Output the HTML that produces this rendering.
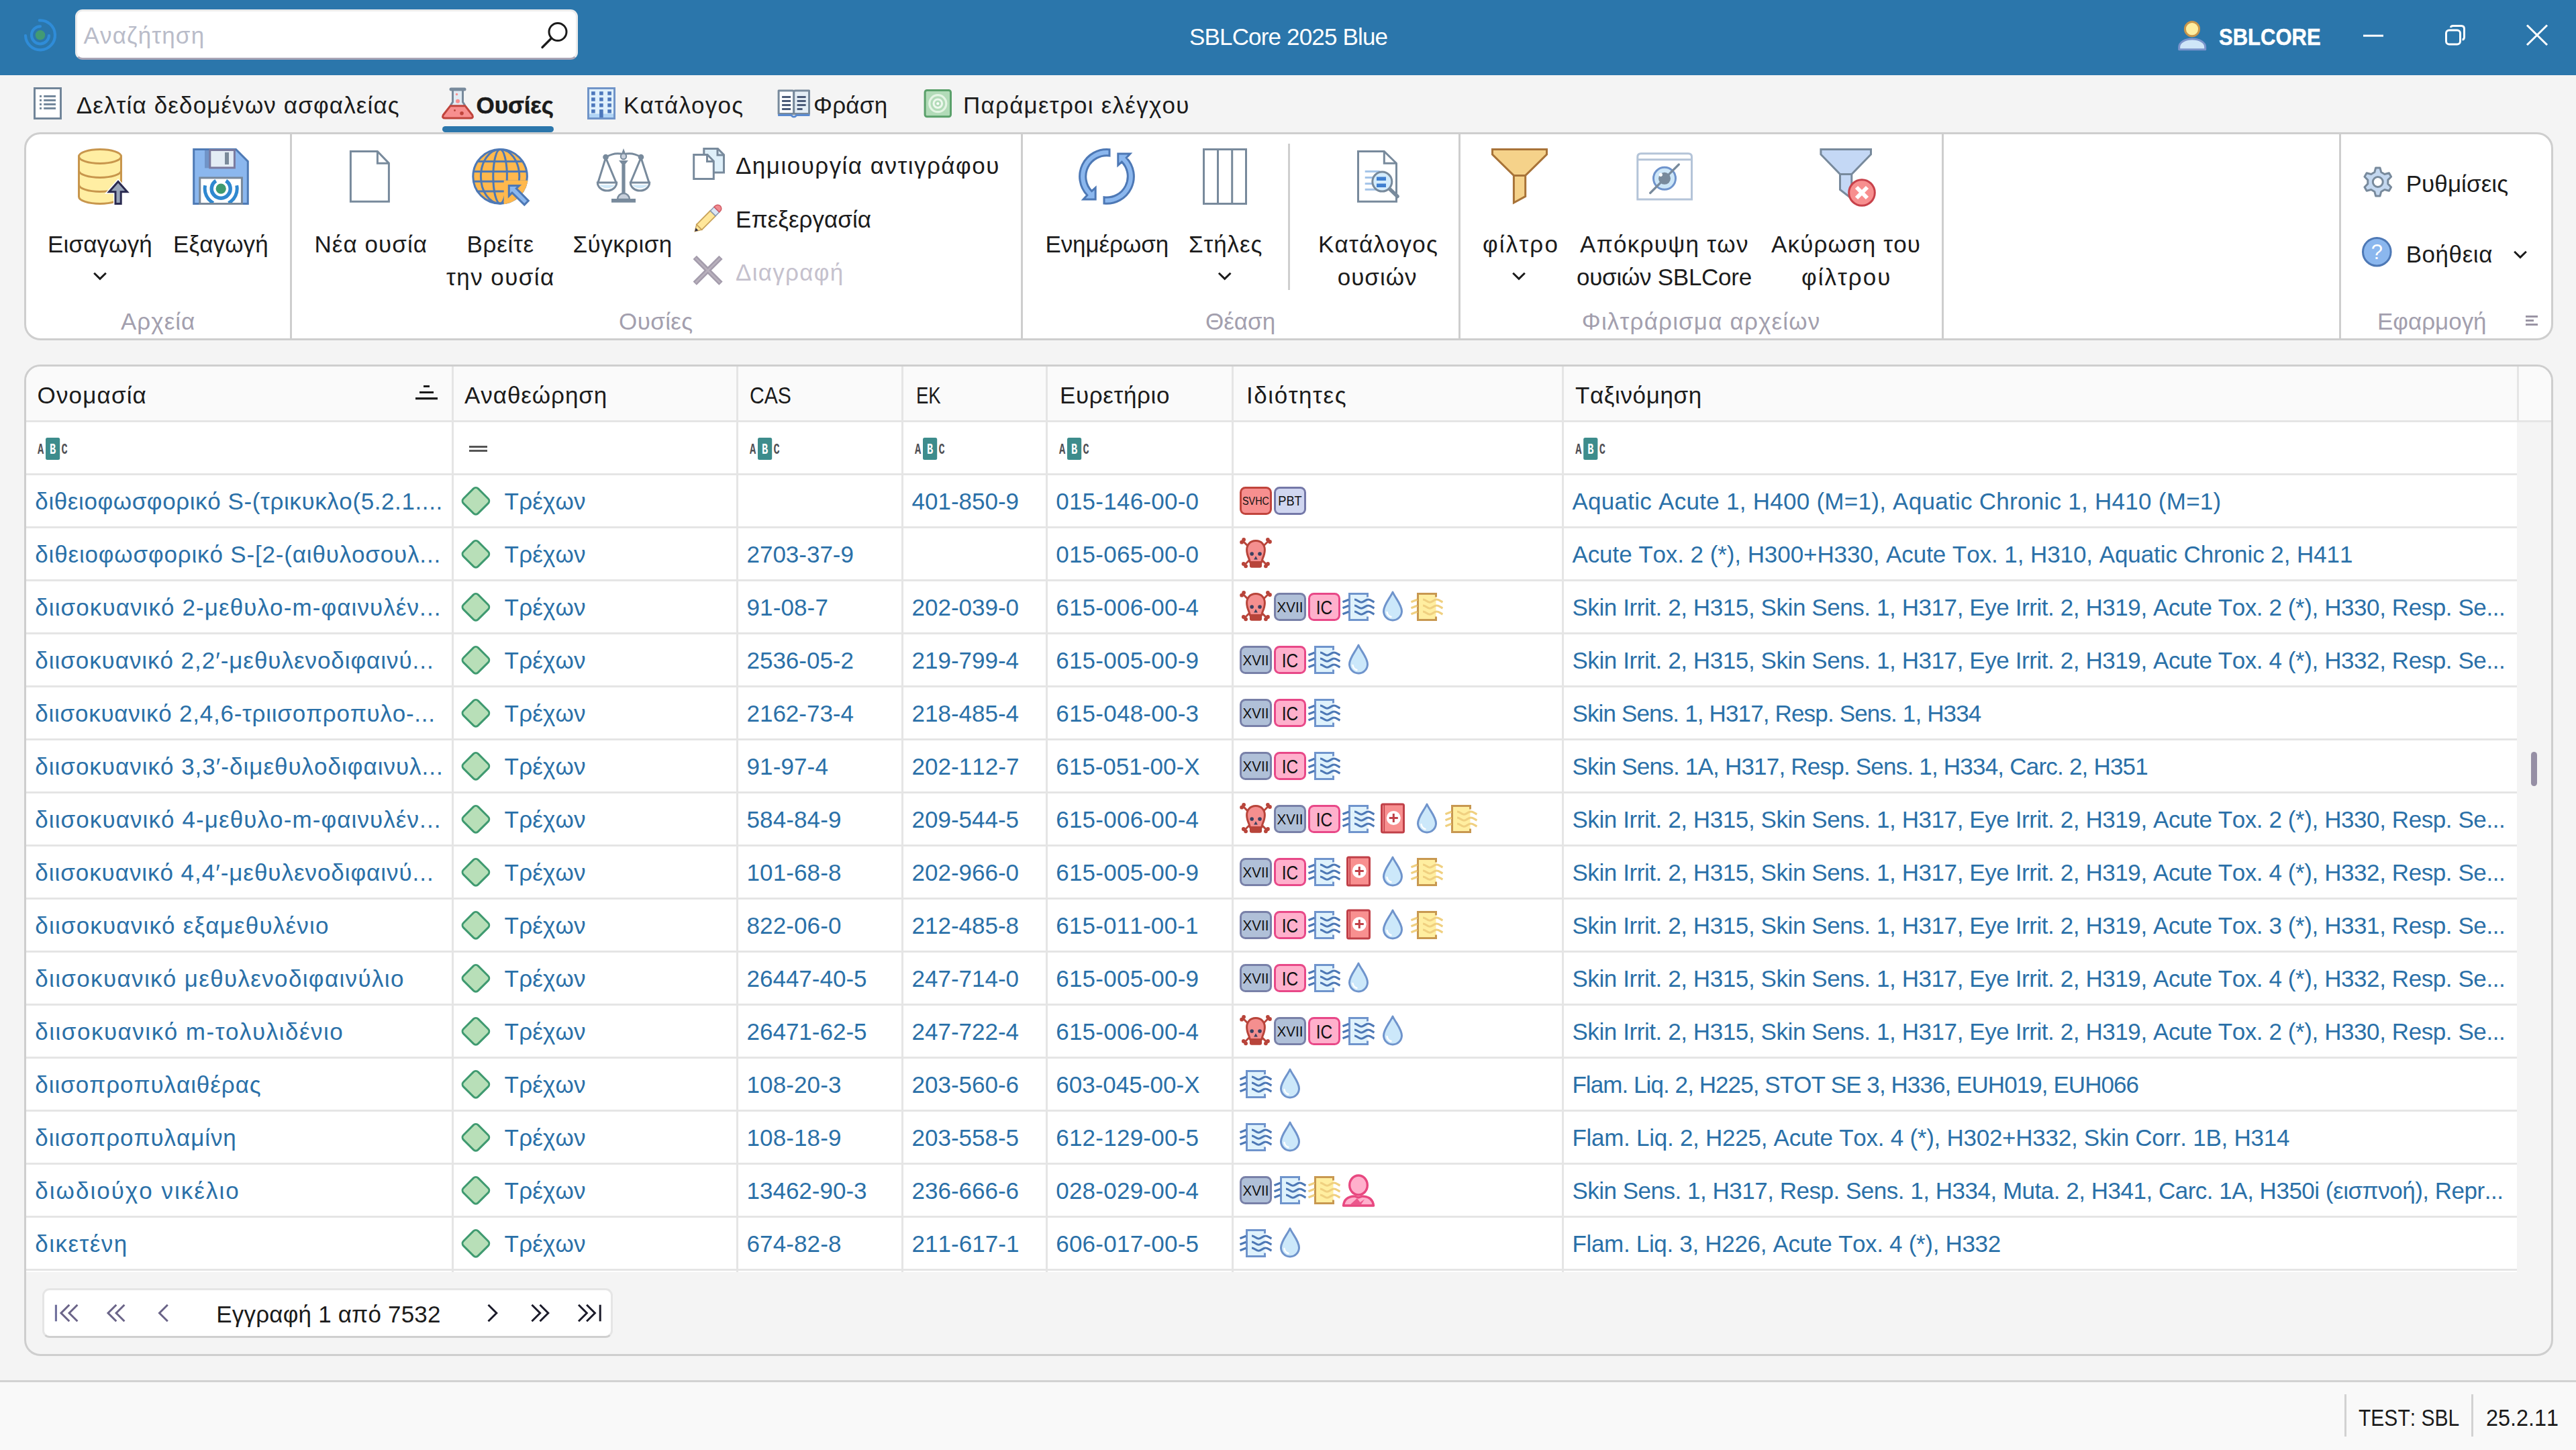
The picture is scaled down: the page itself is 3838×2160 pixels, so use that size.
<!DOCTYPE html>
<html lang="el"><head><meta charset="utf-8"><title>SBLCore 2025 Blue</title>
<style>
html,body{margin:0;padding:0;}
body{width:3838px;height:2160px;overflow:hidden;position:relative;background:#f4f4f4;
font-family:"Liberation Sans",sans-serif;font-kerning:none;}
.t{position:absolute;white-space:pre;line-height:normal;}
svg{overflow:visible;}
</style></head><body>
<div style="position:absolute;left:0px;top:0px;width:3838px;height:112px;background:#2b76ab;"></div>
<div style="position:absolute;left:112px;top:14px;width:749px;height:75px;box-sizing:border-box;background:#fff;border:3px solid #ececec;border-bottom-color:#a9a5b6;border-radius:11px;"></div>
<span class="t " style="left:124.5px;top:33.0px;font-size:35px;letter-spacing:1.158px;color:#b9bcc9;">Αναζήτηση</span>
<span class="t " style="left:1772.0px;top:35.3px;font-size:35px;letter-spacing:-0.837px;color:#fff;">SBLCore 2025 Blue</span>
<span class="t " style="left:3306.0px;top:35.3px;font-size:35px;transform:scaleX(0.8860);transform-origin:0 0;color:#fff;font-weight:bold;-webkit-text-stroke:0.5px #fff;">SBLCORE</span>
<span class="t " style="left:113.7px;top:137.1px;font-size:35px;letter-spacing:1.134px;color:#1b1b1b;">Δελτία δεδομένων ασφαλείας</span>
<span class="t " style="left:709.6px;top:137.1px;font-size:35px;letter-spacing:-0.123px;color:#1b1b1b;font-weight:bold;-webkit-text-stroke:0.5px #1b1b1b;">Ουσίες</span>
<span class="t " style="left:929.0px;top:137.1px;font-size:35px;letter-spacing:1.195px;color:#1b1b1b;">Κατάλογος</span>
<span class="t " style="left:1212.0px;top:137.1px;font-size:35px;letter-spacing:0.250px;color:#1b1b1b;">Φράση</span>
<span class="t " style="left:1435.0px;top:137.1px;font-size:35px;letter-spacing:1.241px;color:#1b1b1b;">Παράμετροι ελέγχου</span>
<div style="position:absolute;left:36px;top:197px;width:3768px;height:310px;box-sizing:border-box;background:#fff;border:3px solid #cecece;border-radius:24px;"></div>
<div style="position:absolute;left:659px;top:188px;width:166px;height:9px;background:#2b76ab;border-radius:4.5px;"></div>
<div style="position:absolute;left:432px;top:200px;width:3px;height:304px;background:#cecece;"></div>
<div style="position:absolute;left:1521px;top:200px;width:3px;height:304px;background:#cecece;"></div>
<div style="position:absolute;left:2173px;top:200px;width:3px;height:304px;background:#cecece;"></div>
<div style="position:absolute;left:2893px;top:200px;width:3px;height:304px;background:#cecece;"></div>
<div style="position:absolute;left:3485px;top:200px;width:3px;height:304px;background:#cecece;"></div>
<div style="position:absolute;left:1919px;top:214px;width:3px;height:218px;background:#cfcfcf;"></div>
<span class="t " style="left:71.0px;top:344.1px;font-size:35px;letter-spacing:0.145px;color:#1b1b1b;">Εισαγωγή</span>
<span class="t " style="left:258.0px;top:344.1px;font-size:35px;letter-spacing:0.094px;color:#1b1b1b;">Εξαγωγή</span>
<span class="t " style="left:468.5px;top:344.1px;font-size:35px;letter-spacing:1.064px;color:#1b1b1b;">Νέα ουσία</span>
<span class="t " style="left:695.5px;top:344.1px;font-size:35px;letter-spacing:0.703px;color:#1b1b1b;">Βρείτε</span>
<span class="t " style="left:665.0px;top:392.8px;font-size:35px;letter-spacing:1.439px;color:#1b1b1b;">την ουσία</span>
<span class="t " style="left:853.5px;top:344.1px;font-size:35px;letter-spacing:0.459px;color:#1b1b1b;">Σύγκριση</span>
<span class="t " style="left:1096.0px;top:227.3px;font-size:35px;letter-spacing:1.476px;color:#1b1b1b;">Δημιουργία αντιγράφου</span>
<span class="t " style="left:1096.0px;top:307.3px;font-size:35px;letter-spacing:0.040px;color:#1b1b1b;">Επεξεργασία</span>
<span class="t " style="left:1096.0px;top:386.3px;font-size:35px;letter-spacing:1.286px;color:#c5c1cd;">Διαγραφή</span>
<span class="t " style="left:1557.4px;top:344.1px;font-size:35px;letter-spacing:-0.073px;color:#1b1b1b;">Ενημέρωση</span>
<span class="t " style="left:1771.0px;top:344.1px;font-size:35px;letter-spacing:0.870px;color:#1b1b1b;">Στήλες</span>
<span class="t " style="left:1964.0px;top:344.1px;font-size:35px;letter-spacing:1.170px;color:#1b1b1b;">Κατάλογος</span>
<span class="t " style="left:1992.7px;top:392.8px;font-size:35px;letter-spacing:1.023px;color:#1b1b1b;">ουσιών</span>
<span class="t " style="left:2209.0px;top:344.1px;font-size:35px;letter-spacing:2.143px;color:#1b1b1b;">φίλτρο</span>
<span class="t " style="left:2354.0px;top:344.1px;font-size:35px;letter-spacing:1.289px;color:#1b1b1b;">Απόκρυψη των</span>
<span class="t " style="left:2349.0px;top:392.8px;font-size:35px;letter-spacing:-0.260px;color:#1b1b1b;">ουσιών SBLCore</span>
<span class="t " style="left:2639.0px;top:344.1px;font-size:35px;letter-spacing:1.150px;color:#1b1b1b;">Ακύρωση του</span>
<span class="t " style="left:2684.0px;top:392.8px;font-size:35px;letter-spacing:2.003px;color:#1b1b1b;">φίλτρου</span>
<span class="t " style="left:3584.7px;top:253.8px;font-size:35px;letter-spacing:0.079px;color:#1b1b1b;">Ρυθμίσεις</span>
<span class="t " style="left:3584.7px;top:359.3px;font-size:35px;letter-spacing:0.553px;color:#1b1b1b;">Βοήθεια</span>
<span class="t " style="left:180.0px;top:459.2px;font-size:35px;letter-spacing:1.000px;color:#a39fae;">Αρχεία</span>
<span class="t " style="left:922.0px;top:459.2px;font-size:35px;letter-spacing:0.403px;color:#a39fae;">Ουσίες</span>
<span class="t " style="left:1796.0px;top:459.2px;font-size:35px;letter-spacing:0.000px;color:#a39fae;">Θέαση</span>
<span class="t " style="left:2356.8px;top:459.2px;font-size:35px;letter-spacing:1.179px;color:#a39fae;">Φιλτράρισμα αρχείων</span>
<span class="t " style="left:3541.9px;top:459.2px;font-size:35px;letter-spacing:-0.012px;color:#a39fae;">Εφαρμογή</span>
<div style="position:absolute;left:36px;top:543px;width:3768px;height:1477px;box-sizing:border-box;background:#f4f4f4;border:3px solid #cecece;border-radius:24px;overflow:hidden;"><div style="position:absolute;left:0;top:0;width:3762px;height:80px;background:#fafafa;"></div><div style="position:absolute;left:0;top:83px;width:3711px;height:1266px;background:#fff;"></div></div>
<div style="position:absolute;left:39px;top:626px;width:3762px;height:3px;background:#e5e5e5;"></div>
<div style="position:absolute;left:39px;top:705px;width:3711px;height:3px;background:#e5e5e5;"></div>
<div style="position:absolute;left:39px;top:784px;width:3711px;height:3px;background:#e5e5e5;"></div>
<div style="position:absolute;left:39px;top:863px;width:3711px;height:3px;background:#e5e5e5;"></div>
<div style="position:absolute;left:39px;top:942px;width:3711px;height:3px;background:#e5e5e5;"></div>
<div style="position:absolute;left:39px;top:1021px;width:3711px;height:3px;background:#e5e5e5;"></div>
<div style="position:absolute;left:39px;top:1100px;width:3711px;height:3px;background:#e5e5e5;"></div>
<div style="position:absolute;left:39px;top:1179px;width:3711px;height:3px;background:#e5e5e5;"></div>
<div style="position:absolute;left:39px;top:1258px;width:3711px;height:3px;background:#e5e5e5;"></div>
<div style="position:absolute;left:39px;top:1337px;width:3711px;height:3px;background:#e5e5e5;"></div>
<div style="position:absolute;left:39px;top:1416px;width:3711px;height:3px;background:#e5e5e5;"></div>
<div style="position:absolute;left:39px;top:1495px;width:3711px;height:3px;background:#e5e5e5;"></div>
<div style="position:absolute;left:39px;top:1574px;width:3711px;height:3px;background:#e5e5e5;"></div>
<div style="position:absolute;left:39px;top:1653px;width:3711px;height:3px;background:#e5e5e5;"></div>
<div style="position:absolute;left:39px;top:1732px;width:3711px;height:3px;background:#e5e5e5;"></div>
<div style="position:absolute;left:39px;top:1811px;width:3711px;height:3px;background:#e5e5e5;"></div>
<div style="position:absolute;left:39px;top:1890px;width:3711px;height:3px;background:#e5e5e5;"></div>
<div style="position:absolute;left:673px;top:546px;width:3px;height:1349px;background:#e5e5e5;"></div>
<div style="position:absolute;left:1097px;top:546px;width:3px;height:1349px;background:#e5e5e5;"></div>
<div style="position:absolute;left:1343px;top:546px;width:3px;height:1349px;background:#e5e5e5;"></div>
<div style="position:absolute;left:1558px;top:546px;width:3px;height:1349px;background:#e5e5e5;"></div>
<div style="position:absolute;left:1835px;top:546px;width:3px;height:1349px;background:#e5e5e5;"></div>
<div style="position:absolute;left:2327px;top:546px;width:3px;height:1349px;background:#e5e5e5;"></div>
<div style="position:absolute;left:3750px;top:546px;width:3px;height:83px;background:#e5e5e5;"></div>
<span class="t " style="left:55.6px;top:569.1px;font-size:35px;letter-spacing:1.145px;color:#1b1b1b;">Ονομασία</span>
<span class="t " style="left:692.0px;top:569.1px;font-size:35px;letter-spacing:0.932px;color:#1b1b1b;">Αναθεώρηση</span>
<span class="t " style="left:1117.0px;top:569.1px;font-size:35px;transform:scaleX(0.8611);transform-origin:0 0;color:#1b1b1b;">CAS</span>
<span class="t " style="left:1364.5px;top:569.1px;font-size:35px;transform:scaleX(0.7870);transform-origin:0 0;color:#1b1b1b;">ΕΚ</span>
<span class="t " style="left:1579.0px;top:569.1px;font-size:35px;letter-spacing:0.625px;color:#1b1b1b;">Ευρετήριο</span>
<span class="t " style="left:1857.0px;top:569.1px;font-size:35px;letter-spacing:1.564px;color:#1b1b1b;">Ιδιότητες</span>
<span class="t " style="left:2347.0px;top:569.1px;font-size:35px;letter-spacing:0.608px;color:#1b1b1b;">Ταξινόμηση</span>
<span class="t " style="left:52.3px;top:727.0px;font-size:35px;letter-spacing:0.597px;color:#2a70a8;">διθειοφωσφορικό S-(τρικυκλο(5.2.1....</span>
<span class="t " style="left:751.6px;top:727.0px;font-size:35px;letter-spacing:0.173px;color:#2a70a8;">Τρέχων</span>
<span class="t " style="left:1358.6px;top:727.0px;font-size:35px;letter-spacing:-0.011px;color:#2a70a8;">401-850-9</span>
<span class="t " style="left:1573.2px;top:727.0px;font-size:35px;letter-spacing:0.248px;color:#2a70a8;">015-146-00-0</span>
<span class="t " style="left:2342.4px;top:727.0px;font-size:35px;letter-spacing:0.273px;color:#2a70a8;">Aquatic Acute 1, H400 (M=1), Aquatic Chronic 1, H410 (M=1)</span>
<span class="t " style="left:52.3px;top:806.0px;font-size:35px;letter-spacing:0.829px;color:#2a70a8;">διθειοφωσφορικό S-[2-(αιθυλοσουλ...</span>
<span class="t " style="left:751.6px;top:806.0px;font-size:35px;letter-spacing:0.173px;color:#2a70a8;">Τρέχων</span>
<span class="t " style="left:1112.5px;top:806.0px;font-size:35px;letter-spacing:-0.011px;color:#2a70a8;">2703-37-9</span>
<span class="t " style="left:1573.2px;top:806.0px;font-size:35px;letter-spacing:0.248px;color:#2a70a8;">015-065-00-0</span>
<span class="t " style="left:2342.4px;top:806.0px;font-size:35px;letter-spacing:-0.074px;color:#2a70a8;">Acute Tox. 2 (*), H300+H330, Acute Tox. 1, H310, Aquatic Chronic 2, H411</span>
<span class="t " style="left:52.3px;top:885.0px;font-size:35px;letter-spacing:1.094px;color:#2a70a8;">διισοκυανικό 2-μεθυλο-m-φαινυλέν...</span>
<span class="t " style="left:751.6px;top:885.0px;font-size:35px;letter-spacing:0.173px;color:#2a70a8;">Τρέχων</span>
<span class="t " style="left:1112.5px;top:885.0px;font-size:35px;letter-spacing:0.119px;color:#2a70a8;">91-08-7</span>
<span class="t " style="left:1358.6px;top:885.0px;font-size:35px;letter-spacing:-0.011px;color:#2a70a8;">202-039-0</span>
<span class="t " style="left:1573.2px;top:885.0px;font-size:35px;letter-spacing:0.248px;color:#2a70a8;">615-006-00-4</span>
<span class="t " style="left:2342.4px;top:885.0px;font-size:35px;letter-spacing:-0.415px;color:#2a70a8;">Skin Irrit. 2, H315, Skin Sens. 1, H317, Eye Irrit. 2, H319, Acute Tox. 2 (*), H330, Resp. Se...</span>
<span class="t " style="left:52.3px;top:964.0px;font-size:35px;letter-spacing:0.952px;color:#2a70a8;">διισοκυανικό 2,2′-μεθυλενοδιφαινύ...</span>
<span class="t " style="left:751.6px;top:964.0px;font-size:35px;letter-spacing:0.173px;color:#2a70a8;">Τρέχων</span>
<span class="t " style="left:1112.5px;top:964.0px;font-size:35px;letter-spacing:-0.011px;color:#2a70a8;">2536-05-2</span>
<span class="t " style="left:1358.6px;top:964.0px;font-size:35px;letter-spacing:-0.011px;color:#2a70a8;">219-799-4</span>
<span class="t " style="left:1573.2px;top:964.0px;font-size:35px;letter-spacing:0.248px;color:#2a70a8;">615-005-00-9</span>
<span class="t " style="left:2342.4px;top:964.0px;font-size:35px;letter-spacing:-0.415px;color:#2a70a8;">Skin Irrit. 2, H315, Skin Sens. 1, H317, Eye Irrit. 2, H319, Acute Tox. 4 (*), H332, Resp. Se...</span>
<span class="t " style="left:52.3px;top:1043.0px;font-size:35px;letter-spacing:0.753px;color:#2a70a8;">διισοκυανικό 2,4,6-τριισοπροπυλο-...</span>
<span class="t " style="left:751.6px;top:1043.0px;font-size:35px;letter-spacing:0.173px;color:#2a70a8;">Τρέχων</span>
<span class="t " style="left:1112.5px;top:1043.0px;font-size:35px;letter-spacing:-0.011px;color:#2a70a8;">2162-73-4</span>
<span class="t " style="left:1358.6px;top:1043.0px;font-size:35px;letter-spacing:-0.011px;color:#2a70a8;">218-485-4</span>
<span class="t " style="left:1573.2px;top:1043.0px;font-size:35px;letter-spacing:0.248px;color:#2a70a8;">615-048-00-3</span>
<span class="t " style="left:2342.4px;top:1043.0px;font-size:35px;letter-spacing:-0.845px;color:#2a70a8;">Skin Sens. 1, H317, Resp. Sens. 1, H334</span>
<span class="t " style="left:52.3px;top:1122.0px;font-size:35px;letter-spacing:0.994px;color:#2a70a8;">διισοκυανικό 3,3′-διμεθυλοδιφαινυλ...</span>
<span class="t " style="left:751.6px;top:1122.0px;font-size:35px;letter-spacing:0.173px;color:#2a70a8;">Τρέχων</span>
<span class="t " style="left:1112.5px;top:1122.0px;font-size:35px;letter-spacing:0.119px;color:#2a70a8;">91-97-4</span>
<span class="t " style="left:1358.6px;top:1122.0px;font-size:35px;letter-spacing:0.040px;color:#2a70a8;">202-112-7</span>
<span class="t " style="left:1573.2px;top:1122.0px;font-size:35px;letter-spacing:0.029px;color:#2a70a8;">615-051-00-X</span>
<span class="t " style="left:2342.4px;top:1122.0px;font-size:35px;letter-spacing:-0.785px;color:#2a70a8;">Skin Sens. 1A, H317, Resp. Sens. 1, H334, Carc. 2, H351</span>
<span class="t " style="left:52.3px;top:1201.0px;font-size:35px;letter-spacing:1.094px;color:#2a70a8;">διισοκυανικό 4-μεθυλο-m-φαινυλέν...</span>
<span class="t " style="left:751.6px;top:1201.0px;font-size:35px;letter-spacing:0.173px;color:#2a70a8;">Τρέχων</span>
<span class="t " style="left:1112.5px;top:1201.0px;font-size:35px;letter-spacing:0.117px;color:#2a70a8;">584-84-9</span>
<span class="t " style="left:1358.6px;top:1201.0px;font-size:35px;letter-spacing:-0.011px;color:#2a70a8;">209-544-5</span>
<span class="t " style="left:1573.2px;top:1201.0px;font-size:35px;letter-spacing:0.248px;color:#2a70a8;">615-006-00-4</span>
<span class="t " style="left:2342.4px;top:1201.0px;font-size:35px;letter-spacing:-0.415px;color:#2a70a8;">Skin Irrit. 2, H315, Skin Sens. 1, H317, Eye Irrit. 2, H319, Acute Tox. 2 (*), H330, Resp. Se...</span>
<span class="t " style="left:52.3px;top:1280.0px;font-size:35px;letter-spacing:0.952px;color:#2a70a8;">διισοκυανικό 4,4′-μεθυλενοδιφαινύ...</span>
<span class="t " style="left:751.6px;top:1280.0px;font-size:35px;letter-spacing:0.173px;color:#2a70a8;">Τρέχων</span>
<span class="t " style="left:1112.5px;top:1280.0px;font-size:35px;letter-spacing:0.117px;color:#2a70a8;">101-68-8</span>
<span class="t " style="left:1358.6px;top:1280.0px;font-size:35px;letter-spacing:-0.011px;color:#2a70a8;">202-966-0</span>
<span class="t " style="left:1573.2px;top:1280.0px;font-size:35px;letter-spacing:0.248px;color:#2a70a8;">615-005-00-9</span>
<span class="t " style="left:2342.4px;top:1280.0px;font-size:35px;letter-spacing:-0.415px;color:#2a70a8;">Skin Irrit. 2, H315, Skin Sens. 1, H317, Eye Irrit. 2, H319, Acute Tox. 4 (*), H332, Resp. Se...</span>
<span class="t " style="left:52.3px;top:1359.0px;font-size:35px;letter-spacing:1.184px;color:#2a70a8;">διισοκυανικό εξαμεθυλένιο</span>
<span class="t " style="left:751.6px;top:1359.0px;font-size:35px;letter-spacing:0.173px;color:#2a70a8;">Τρέχων</span>
<span class="t " style="left:1112.5px;top:1359.0px;font-size:35px;letter-spacing:0.117px;color:#2a70a8;">822-06-0</span>
<span class="t " style="left:1358.6px;top:1359.0px;font-size:35px;letter-spacing:-0.011px;color:#2a70a8;">212-485-8</span>
<span class="t " style="left:1573.2px;top:1359.0px;font-size:35px;letter-spacing:0.194px;color:#2a70a8;">615-011-00-1</span>
<span class="t " style="left:2342.4px;top:1359.0px;font-size:35px;letter-spacing:-0.415px;color:#2a70a8;">Skin Irrit. 2, H315, Skin Sens. 1, H317, Eye Irrit. 2, H319, Acute Tox. 3 (*), H331, Resp. Se...</span>
<span class="t " style="left:52.3px;top:1438.0px;font-size:35px;letter-spacing:1.345px;color:#2a70a8;">διισοκυανικό μεθυλενοδιφαινύλιο</span>
<span class="t " style="left:751.6px;top:1438.0px;font-size:35px;letter-spacing:0.173px;color:#2a70a8;">Τρέχων</span>
<span class="t " style="left:1112.5px;top:1438.0px;font-size:35px;letter-spacing:0.002px;color:#2a70a8;">26447-40-5</span>
<span class="t " style="left:1358.6px;top:1438.0px;font-size:35px;letter-spacing:-0.011px;color:#2a70a8;">247-714-0</span>
<span class="t " style="left:1573.2px;top:1438.0px;font-size:35px;letter-spacing:0.248px;color:#2a70a8;">615-005-00-9</span>
<span class="t " style="left:2342.4px;top:1438.0px;font-size:35px;letter-spacing:-0.415px;color:#2a70a8;">Skin Irrit. 2, H315, Skin Sens. 1, H317, Eye Irrit. 2, H319, Acute Tox. 4 (*), H332, Resp. Se...</span>
<span class="t " style="left:52.3px;top:1517.0px;font-size:35px;letter-spacing:1.508px;color:#2a70a8;">διισοκυανικό m-τολυλιδένιο</span>
<span class="t " style="left:751.6px;top:1517.0px;font-size:35px;letter-spacing:0.173px;color:#2a70a8;">Τρέχων</span>
<span class="t " style="left:1112.5px;top:1517.0px;font-size:35px;letter-spacing:0.002px;color:#2a70a8;">26471-62-5</span>
<span class="t " style="left:1358.6px;top:1517.0px;font-size:35px;letter-spacing:-0.011px;color:#2a70a8;">247-722-4</span>
<span class="t " style="left:1573.2px;top:1517.0px;font-size:35px;letter-spacing:0.248px;color:#2a70a8;">615-006-00-4</span>
<span class="t " style="left:2342.4px;top:1517.0px;font-size:35px;letter-spacing:-0.415px;color:#2a70a8;">Skin Irrit. 2, H315, Skin Sens. 1, H317, Eye Irrit. 2, H319, Acute Tox. 2 (*), H330, Resp. Se...</span>
<span class="t " style="left:52.3px;top:1596.0px;font-size:35px;letter-spacing:0.934px;color:#2a70a8;">διισοπροπυλαιθέρας</span>
<span class="t " style="left:751.6px;top:1596.0px;font-size:35px;letter-spacing:0.173px;color:#2a70a8;">Τρέχων</span>
<span class="t " style="left:1112.5px;top:1596.0px;font-size:35px;letter-spacing:0.117px;color:#2a70a8;">108-20-3</span>
<span class="t " style="left:1358.6px;top:1596.0px;font-size:35px;letter-spacing:-0.011px;color:#2a70a8;">203-560-6</span>
<span class="t " style="left:1573.2px;top:1596.0px;font-size:35px;letter-spacing:0.029px;color:#2a70a8;">603-045-00-X</span>
<span class="t " style="left:2342.4px;top:1596.0px;font-size:35px;letter-spacing:-0.925px;color:#2a70a8;">Flam. Liq. 2, H225, STOT SE 3, H336, EUH019, EUH066</span>
<span class="t " style="left:52.3px;top:1675.0px;font-size:35px;letter-spacing:0.932px;color:#2a70a8;">διισοπροπυλαμίνη</span>
<span class="t " style="left:751.6px;top:1675.0px;font-size:35px;letter-spacing:0.173px;color:#2a70a8;">Τρέχων</span>
<span class="t " style="left:1112.5px;top:1675.0px;font-size:35px;letter-spacing:0.117px;color:#2a70a8;">108-18-9</span>
<span class="t " style="left:1358.6px;top:1675.0px;font-size:35px;letter-spacing:-0.011px;color:#2a70a8;">203-558-5</span>
<span class="t " style="left:1573.2px;top:1675.0px;font-size:35px;letter-spacing:0.248px;color:#2a70a8;">612-129-00-5</span>
<span class="t " style="left:2342.4px;top:1675.0px;font-size:35px;letter-spacing:-0.261px;color:#2a70a8;">Flam. Liq. 2, H225, Acute Tox. 4 (*), H302+H332, Skin Corr. 1B, H314</span>
<span class="t " style="left:52.3px;top:1754.0px;font-size:35px;letter-spacing:2.018px;color:#2a70a8;">διωδιούχο νικέλιο</span>
<span class="t " style="left:751.6px;top:1754.0px;font-size:35px;letter-spacing:0.173px;color:#2a70a8;">Τρέχων</span>
<span class="t " style="left:1112.5px;top:1754.0px;font-size:35px;letter-spacing:0.002px;color:#2a70a8;">13462-90-3</span>
<span class="t " style="left:1358.6px;top:1754.0px;font-size:35px;letter-spacing:-0.011px;color:#2a70a8;">236-666-6</span>
<span class="t " style="left:1573.2px;top:1754.0px;font-size:35px;letter-spacing:0.248px;color:#2a70a8;">028-029-00-4</span>
<span class="t " style="left:2342.4px;top:1754.0px;font-size:35px;letter-spacing:-0.487px;color:#2a70a8;">Skin Sens. 1, H317, Resp. Sens. 1, H334, Muta. 2, H341, Carc. 1A, H350i (εισπνοή), Repr...</span>
<span class="t " style="left:52.3px;top:1833.0px;font-size:35px;letter-spacing:1.459px;color:#2a70a8;">δικετένη</span>
<span class="t " style="left:751.6px;top:1833.0px;font-size:35px;letter-spacing:0.173px;color:#2a70a8;">Τρέχων</span>
<span class="t " style="left:1112.5px;top:1833.0px;font-size:35px;letter-spacing:0.117px;color:#2a70a8;">674-82-8</span>
<span class="t " style="left:1358.6px;top:1833.0px;font-size:35px;letter-spacing:0.040px;color:#2a70a8;">211-617-1</span>
<span class="t " style="left:1573.2px;top:1833.0px;font-size:35px;letter-spacing:0.248px;color:#2a70a8;">606-017-00-5</span>
<span class="t " style="left:2342.4px;top:1833.0px;font-size:35px;letter-spacing:-0.313px;color:#2a70a8;">Flam. Liq. 3, H226, Acute Tox. 4 (*), H332</span>
<div style="position:absolute;left:3771px;top:1120px;width:9px;height:51px;background:#968fa5;border-radius:4.5px;"></div>
<div style="position:absolute;left:63px;top:1919px;width:850px;height:74px;box-sizing:border-box;background:#fff;border:3px solid #e5e5e5;border-bottom:3px solid #cfcfcf;border-radius:11px;"></div>
<span class="t " style="left:322.3px;top:1938.3px;font-size:35px;letter-spacing:0.182px;color:#1b1b1b;">Εγγραφή 1 από 7532</span>
<div style="position:absolute;left:0px;top:2056px;width:3838px;height:3px;background:#d2d2d2;"></div>
<div style="position:absolute;left:0px;top:2059px;width:3838px;height:101px;background:#f9f9f9;"></div>
<div style="position:absolute;left:3492.5px;top:2077px;width:3px;height:63px;background:#d2d2d2;"></div>
<div style="position:absolute;left:3681.5px;top:2077px;width:3px;height:63px;background:#d2d2d2;"></div>
<span class="t " style="left:3514.0px;top:2092.1px;font-size:35px;transform:scaleX(0.8576);transform-origin:0 0;color:#1b1b1b;">TEST: SBL</span>
<span class="t " style="left:3703.7px;top:2092.1px;font-size:35px;transform:scaleX(0.9255);transform-origin:0 0;color:#1b1b1b;">25.2.11</span>
<svg style="position:absolute;left:0;top:0" width="3838" height="2160" viewBox="0 0 3838 2160"><g transform="translate(60.00 52.30) "><circle cx="0" cy="0" r="7.30" fill="#429a74"/><path d="M0.00 -13.00 A13.0 13.0 0 1 0 12.98 0.68" fill="none" stroke="#2f8cd8" stroke-width="4.20" stroke-linecap="round"/><path d="M-21.99 0.77 A22.0 22.0 0 1 0 -1.15 -21.97" fill="none" stroke="#2f8cd8" stroke-width="4.20" stroke-linecap="round"/></g><circle cx="831" cy="47.5" r="13" fill="none" stroke="#1b1b1b" stroke-width="3"/><path d="M821.5 57 L808 70.5" stroke="#1b1b1b" stroke-width="3.4" stroke-linecap="round"/><path d="M3246.7 73.8 V70 A19.5 12 0 0 1 3285.7 70 V73.8 Z" fill="#cfe6f8" stroke="#7a94cc" stroke-width="3" stroke-linejoin="round"/><circle cx="3266" cy="43.2" r="10.6" fill="#ffeea0" stroke="#c8964c" stroke-width="3"/><path d="M3521 53.2 H3551" stroke="#fff" stroke-width="3"/><rect x="3644.5" y="45" width="21" height="21" rx="4.5" fill="none" stroke="#fff" stroke-width="3"/><path d="M3651.5 41 V41 Q3651.5 38.5 3655 38.5 H3667 Q3671.5 38.5 3671.5 43 V55 Q3671.5 59 3668.5 59" fill="none" stroke="#fff" stroke-width="3"/><path d="M3765 37.5 L3795 67 M3795 37.5 L3765 67" stroke="#fff" stroke-width="3"/><g transform="translate(50.00 130.00) "><rect x="1.5" y="1.5" width="39" height="45" fill="#fff" stroke="#718599" stroke-width="3"/><rect x="9" y="11.9" width="3" height="3" fill="#718599"/><rect x="15.2" y="11.9" width="17.8" height="3" fill="#718599"/><rect x="9" y="17.9" width="3" height="3" fill="#718599"/><rect x="15.2" y="17.9" width="17.8" height="3" fill="#718599"/><rect x="9" y="23.9" width="3" height="3" fill="#718599"/><rect x="15.2" y="23.9" width="17.8" height="3" fill="#718599"/><rect x="9" y="29.9" width="3" height="3" fill="#718599"/><rect x="15.2" y="29.9" width="17.8" height="3" fill="#718599"/></g><g transform="translate(658.00 130.00) "><rect x="16.5" y="3" width="15" height="25" fill="#e1ebf3"/><path d="M16.5 4 V22 L13.2 27" fill="none" stroke="#788a9c" stroke-width="3"/><path d="M31.5 4 V22 L34.8 27" fill="none" stroke="#788a9c" stroke-width="3"/><path d="M12.8 27.8 H35.2 L45.8 41.5 Q47.8 46 43 46 H5 Q0.2 46 2.200 41.5 Z" fill="#f78f8f" stroke="#c0443c" stroke-width="3" stroke-linejoin="round"/><path d="M14 2.900 H34" stroke="#788a9c" stroke-width="5" stroke-linecap="round"/><circle cx="22.5" cy="10.5" r="1.7" fill="#f78f8f"/><circle cx="24" cy="20.8" r="3" fill="#f78f8f"/><circle cx="19.500" cy="34.5" r="1.4" fill="#b8443a"/><circle cx="30" cy="38.800" r="2.800" fill="#c0443c"/></g><g transform="translate(875.00 130.00) "><rect x="1.5" y="1.5" width="39" height="45" fill="#dff0fc" stroke="#7094c8" stroke-width="3"/><rect x="3" y="39.5" width="36" height="5.5" fill="#b0d4f5"/><rect x="6.1" y="6.3" width="5.6" height="5.4" fill="#4d78bc"/><rect x="6.1" y="15.3" width="5.6" height="5.4" fill="#4d78bc"/><rect x="6.1" y="24.1" width="5.6" height="5.4" fill="#4d78bc"/><rect x="6.1" y="33.1" width="5.6" height="5.4" fill="#4d78bc"/><rect x="18.1" y="6.3" width="5.6" height="5.4" fill="#4d78bc"/><rect x="18.1" y="15.3" width="5.6" height="5.4" fill="#4d78bc"/><rect x="18.1" y="24.1" width="5.6" height="5.4" fill="#4d78bc"/><rect x="30.3" y="6.3" width="5.6" height="5.4" fill="#4d78bc"/><rect x="30.3" y="15.3" width="5.6" height="5.4" fill="#4d78bc"/><rect x="30.3" y="24.1" width="5.6" height="5.4" fill="#4d78bc"/><rect x="30.3" y="33.1" width="5.6" height="5.4" fill="#4d78bc"/><rect x="18.1" y="33.1" width="5.6" height="11.900" fill="#4d78bc"/></g><g transform="translate(1158.60 133.00) "><path d="M1.5 2 H22 Q24.2 2 24.2 4.5 V36.5 H1.5 Z" fill="#fbfcfe" stroke="#788a9c" stroke-width="3" stroke-linejoin="round"/><path d="M46.9 2 H26.4 Q24.2 2 24.2 4.5 V36.5 H46.9 Z" fill="#e4edf5" stroke="#788a9c" stroke-width="3" stroke-linejoin="round"/><path d="M0.5 38.5 H20 Q24.2 43.5 28.4 38.5 H47.9" fill="none" stroke="#5a8ad0" stroke-width="3"/><rect x="6.5" y="10" width="13" height="3" fill="#4a5a78"/><rect x="29" y="10" width="13" height="3" fill="#4a5a78"/><rect x="6.5" y="16" width="13" height="3" fill="#4a5a78"/><rect x="29" y="16" width="13" height="3" fill="#4a5a78"/><rect x="6.5" y="22" width="13" height="3" fill="#4a5a78"/><rect x="29" y="22" width="13" height="3" fill="#4a5a78"/><rect x="6.5" y="28" width="13" height="3" fill="#4a5a78"/><rect x="29" y="28" width="8" height="3" fill="#4a5a78"/></g><g transform="translate(1376.60 133.00) "><rect x="1.5" y="1.5" width="38.4" height="39.3" rx="3" fill="#b2dbb8" stroke="#5aa06a" stroke-width="3"/><circle cx="20.7" cy="21.2" r="12.5" fill="none" stroke="#e4f4e4" stroke-width="3.2"/><circle cx="20.7" cy="21.2" r="6.3" fill="none" stroke="#eef8ee" stroke-width="3"/><circle cx="20.7" cy="21.2" r="2" fill="#fff"/></g><g transform="translate(116.00 221.00) "><path d="M1.5 12 V72 A31.5 10.5 0 0 0 64.5 72 V12" fill="#ffeea3" stroke="#c8964c" stroke-width="3"/><ellipse cx="33" cy="12" rx="31.5" ry="10.5" fill="#ffeea3" stroke="#c8964c" stroke-width="3"/><path d="M1.5 33 A31.5 10.5 0 0 0 64.5 33 M1.5 54 A31.5 10.5 0 0 0 64.5 54" fill="none" stroke="#c8964c" stroke-width="3"/><path d="M60 49.5 L73.5 64.7 H64.2 V82.5 H56 V64.7 H46.5 Z" fill="#fff" stroke="#fff" stroke-width="6" stroke-linejoin="miter"/><path d="M60 49.5 L73.5 64.7 H64.2 V82.5 H56 V64.7 H46.5 Z" fill="#98a4b8" stroke="#2a2a50" stroke-width="3" stroke-linejoin="miter"/></g><g transform="translate(287.20 221.00) "><path d="M1.5 1.5 H64.3 L82.1 19.4 V82.5 H1.5 Z" fill="#8bb7ee" stroke="#4e7ab5" stroke-width="3"/><rect x="17.8" y="3" width="8" height="26.4" fill="#7094c8"/><rect x="25.6" y="2.5" width="36.6" height="26.4" fill="#e4edf5" stroke="#7a7a9e" stroke-width="3"/><rect x="47.8" y="6" width="6" height="18" fill="#7a8a9a"/><rect x="10.6" y="43.9" width="62.6" height="38.6" fill="#fff" stroke="#78889a" stroke-width="3"/><clipPath id="flc"><rect x="12.1" y="45.4" width="59.6" height="35.6"/></clipPath><g clip-path="url(#flc)"><circle cx="42" cy="60.2" r="7.6" fill="#3f9a70"/><path d="M34.58 48.33 A14 14 0 1 0 49.42 48.33" fill="none" stroke="#2f88d0" stroke-width="5.5"/><path d="M53.27 81.39 A24 24 0 0 0 65.48 55.21" fill="none" stroke="#2f88d0" stroke-width="5"/><path d="M18.52 55.21 A24 24 0 0 0 30.73 81.39" fill="none" stroke="#2f88d0" stroke-width="5"/></g></g><g transform="translate(520.90 224.00) "><path d="M1.5 1.5 H41.5 L58.5 19.2 V76.2 H1.5 Z" fill="#fff" stroke="#788a9c" stroke-width="3"/><path d="M41.5 1.5 V19.2 H58.5" fill="none" stroke="#788a9c" stroke-width="3"/></g><g transform="translate(745.10 262.90) "><clipPath id="glc"><circle cx="0" cy="0" r="41.8"/></clipPath><circle cx="0" cy="0" r="40.3" fill="#ffb84d" stroke="#4d78b5" stroke-width="3"/><g clip-path="url(#glc)"><g fill="none" stroke="#4d78b5" stroke-width="3"><ellipse cx="0" cy="0" rx="10.3" ry="40.3"/><ellipse cx="0" cy="0" rx="28.7" ry="40.3"/><path d="M-40.3 -22.4 H40.3"/><path d="M-40.3 -7.5 H40.3"/><path d="M-40.3 7.4 H40.3"/><path d="M-40.3 22.2 H40.3"/></g><rect x="5.6" y="5.9" width="40" height="40" fill="#ffb84d"/></g><path d="M13.2 13.5 H28.6 L24.2 17.9 L42.2 36.2 L36.2 42.2 L17.9 24.2 L13.2 28.9 Z" fill="#8bb7ee" stroke="#4d78b5" stroke-width="3" stroke-linejoin="miter"/></g><g transform="translate(929.00 221.00) "><g fill="none" stroke="#788a9c" stroke-width="3"><path d="M-26 13 Q-13 5 0 9 Q13 5 26 13"/><path d="M-26.5 14 L-38 51 M-26.5 14 L-11 51"/><path d="M26 14 L10.5 51 M26 14 L38 51"/></g><path d="M-38.7 51 H-10.3 A14.2 12 0 0 1 -38.7 51 Z" fill="#fff" stroke="#788a9c" stroke-width="3"/><path d="M10.3 51 H38.7 A14.2 12 0 0 1 10.3 51 Z" fill="#fff" stroke="#788a9c" stroke-width="3"/><path d="M-36 54.5 H-13 A13 9 0 0 1 -36 54.5 Z" fill="#cfe8f8"/><path d="M13 54.5 H36 A13 9 0 0 1 13 54.5 Z" fill="#cfe8f8"/><rect x="-2.6" y="18" width="5.2" height="58" fill="#788a9c"/><path d="M-7 18 H7 L3 23 H-3 Z" fill="#788a9c"/><path d="M0 0 L3 8 L0 12 L-3 8 Z" fill="#788a9c"/><circle cx="0" cy="12" r="4.2" fill="#c8d0dc" stroke="#788a9c" stroke-width="2"/><circle cx="-26.5" cy="13" r="4.3" fill="#788a9c"/><circle cx="26" cy="13" r="4.3" fill="#788a9c"/><path d="M-9 76 A9 9 0 0 1 9 76 Z" fill="#c8d0dc" stroke="#788a9c" stroke-width="2.5"/><rect x="-18" y="75" width="36" height="5.7" fill="#788a9c"/></g><g transform="translate(1032.00 220.00) "><path d="M16.8 1.5 H37.5 L46.5 10.5 V37 H16.8 Z" fill="#dff0fa" stroke="#788a9c" stroke-width="3"/><path d="M37 1.5 V11 H46.5" fill="none" stroke="#788a9c" stroke-width="3"/><path d="M1.7 10.5 H22 L31.3 20 V46.5 H1.7 Z" fill="#fff" stroke="#788a9c" stroke-width="3"/><path d="M21.5 10.5 V20.5 H31.3" fill="none" stroke="#788a9c" stroke-width="3"/></g><g transform="translate(1035.00 345.00) "><g transform="rotate(-45)"><path d="M0.5 0 L9.500 -5.5 V5.5 Z" fill="#ffe79a" stroke="#c9a35a" stroke-width="1.5"/><path d="M0.5 0 L5 -2.700 V2.700 Z" fill="#2a2a4a"/><rect x="9.500" y="-5.5" width="29" height="11" fill="#ffe79a" stroke="#c9a35a" stroke-width="1.8"/><rect x="38.5" y="-5.5" width="8" height="11" fill="#dbe6f5" stroke="#8a9ab0" stroke-width="1.5"/><path d="M46.5 -5.5 H48.5 A5.5 5.5 0 0 1 48.5 5.5 H46.5 Z" fill="#f08a90" stroke="#d05a64" stroke-width="1.5"/></g></g><g transform="translate(1032.40 380.60) "><path d="M2.800 2.800 L41.600 41.600 M41.600 2.800 L2.800 41.600" stroke="#a49cac" stroke-width="7.5"/><path d="M4 4 L40.400 40.400 M40.400 4 L4 40.400" stroke="#b8b0bc" stroke-width="2.5"/></g><g transform="translate(1649.00 262.90) "><g fill="#8bb7ee" stroke="#4d78b5" stroke-width="3" stroke-linejoin="miter"><path d="M4 -40.2 A40.4 40.4 0 0 0 -29.2 27.9 L-34.9 34 H-16.8 V16.7 L-22.4 21.8 A31.2 31.2 0 0 1 4 -30.9 Z"/><path d="M4 -40.2 A40.4 40.4 0 0 0 -29.2 27.9 L-34.9 34 H-16.8 V16.7 L-22.4 21.8 A31.2 31.2 0 0 1 4 -30.9 Z" transform="rotate(180)"/></g></g><g transform="translate(1792.00 221.00) "><rect x="1.5" y="1.5" width="63" height="81" fill="#fff" stroke="#788a9c" stroke-width="3"/><path d="M22.5 1.5 V82.5 M43.7 1.5 V82.5" stroke="#788a9c" stroke-width="3"/></g><g transform="translate(2022.00 224.00) "><path d="M1.5 1.5 H40.3 L58.5 19.3 V76.3 H1.5 Z" fill="#fff" stroke="#788a9c" stroke-width="3"/><path d="M40.3 1.5 V19.3 H58.5" fill="none" stroke="#788a9c" stroke-width="3"/><rect x="11.7" y="29.9" width="22" height="3" fill="#a4c4e8"/><rect x="11.7" y="39.0" width="22" height="3" fill="#a4c4e8"/><rect x="11.7" y="48.1" width="22" height="3" fill="#a4c4e8"/><rect x="11.7" y="56.8" width="22" height="3" fill="#a4c4e8"/><path d="M49 58 L60 68.5" stroke="#788a9c" stroke-width="5.5" stroke-linecap="round"/><circle cx="37.3" cy="46.6" r="14.5" fill="#d4ecfc" stroke="#788a9c" stroke-width="3"/><rect x="29" y="39.5" width="14" height="5.5" fill="#3f7fd0"/><rect x="29" y="49.5" width="14" height="5.5" fill="#3f7fd0"/></g><g transform="translate(2222.00 221.00) "><path d="M1.5 1.5 H82.5 V9 L50.7 40.5 V71.5 L33.4 81 V40.5 L1.5 9 Z" fill="#f5d28a" stroke="#a87338" stroke-width="3" stroke-linejoin="miter"/><path d="M33.4 40.5 H50.7" stroke="#a87338" stroke-width="3"/></g><g transform="translate(2438.30 227.30) "><path d="M1.5 69.8 V6.5 Q1.5 1.5 6.5 1.5 H77.2 Q82.2 1.5 82.2 6.5 V69.8 Z" fill="#fff" stroke="#b4c4d8" stroke-width="3"/><path d="M1.5 10.5 H82.2" stroke="#b4c4d8" stroke-width="3"/><circle cx="41.7" cy="38.5" r="16.5" fill="#cce6f8" stroke="#6f94cc" stroke-width="3"/><circle cx="41.7" cy="38.5" r="9" fill="#788a9c"/><circle cx="36" cy="33" r="2.6" fill="#fff"/><path d="M20.4 60.2 L63 17.7" stroke="#788a9c" stroke-width="3.2" stroke-linecap="round"/></g><g transform="translate(2711.40 221.00) "><path d="M1.5 1.5 H76.1 V9 L47.4 38.5 V75 L30.1 61.5 V38.5 L1.5 9 Z" fill="#c4d8f5" stroke="#788a9c" stroke-width="3"/><path d="M30.1 38.5 H47.4" stroke="#788a9c" stroke-width="3"/><circle cx="62.6" cy="66" r="19.3" fill="#f78f8f" stroke="#c8414a" stroke-width="3"/><path d="M54.6 58 L70.6 74 M70.6 58 L54.6 74" stroke="#fff" stroke-width="6"/></g><g transform="translate(3542.80 271.00) "><path d="M4.98 -14.47 L3.15 -21.07 L-3.15 -21.07 L-4.98 -14.47 L-10.04 -11.55 L-16.67 -13.26 L-19.82 -7.81 L-15.02 -2.92 L-15.02 2.92 L-19.82 7.81 L-16.67 13.26 L-10.04 11.55 L-4.98 14.47 L-3.15 21.07 L3.15 21.07 L4.98 14.47 L10.04 11.55 L16.67 13.26 L19.82 7.81 L15.02 2.92 L15.02 -2.92 L19.82 -7.81 L16.67 -13.26 L10.04 -11.55 Z" fill="#c4d8f0" stroke="#788a9c" stroke-width="3" stroke-linejoin="round"/><circle cx="0" cy="0" r="7.5" fill="#fff" stroke="#788a9c" stroke-width="3"/></g><g transform="translate(3541.30 375.20) "><circle cx="0" cy="0" r="20.8" fill="#8bb7ee" stroke="#4d78b5" stroke-width="3"/><text x="0" y="11" font-family="Liberation Sans, sans-serif" font-size="31" fill="#fff" text-anchor="middle">?</text></g><path d="M140.2 406.7 L149.0 415.3 L157.8 406.7" fill="none" stroke="#1b1b1b" stroke-width="3"/><path d="M1815.9 406.7 L1824.7 415.3 L1833.5 406.7" fill="none" stroke="#1b1b1b" stroke-width="3"/><path d="M2254.2 406.7 L2263.0 415.3 L2271.8 406.7" fill="none" stroke="#1b1b1b" stroke-width="3"/><path d="M3746.2 374.7 L3755.0 383.3 L3763.8 374.7" fill="none" stroke="#1b1b1b" stroke-width="3"/><path d="M3763 471.5 H3781 M3763 477.5 H3775 M3763 483.500 H3781" stroke="#9a94a4" stroke-width="3"/><path d="M631 575.5 H640 M625 584.5 H646 M619 593.7 H652" stroke="#1b1b1b" stroke-width="3.2"/><g transform="translate(56.00 652.00) "><rect x="12" y="0" width="21.2" height="33" rx="2.5" fill="#3d8c8c"/><text x="0" y="23.9" font-family="Liberation Mono, monospace" font-weight="bold" font-size="21.5" lengthAdjust="spacingAndGlyphs" textLength="9.2" fill="#505055">A</text><text x="18" y="23.9" font-family="Liberation Mono, monospace" font-weight="bold" font-size="21.5" lengthAdjust="spacingAndGlyphs" textLength="9.2" fill="#fff">B</text><text x="35.6" y="23.9" font-family="Liberation Mono, monospace" font-weight="bold" font-size="21.5" lengthAdjust="spacingAndGlyphs" textLength="9.2" fill="#505055">C</text></g><g transform="translate(1117.00 652.00) "><rect x="12" y="0" width="21.2" height="33" rx="2.5" fill="#3d8c8c"/><text x="0" y="23.9" font-family="Liberation Mono, monospace" font-weight="bold" font-size="21.5" lengthAdjust="spacingAndGlyphs" textLength="9.2" fill="#505055">A</text><text x="18" y="23.9" font-family="Liberation Mono, monospace" font-weight="bold" font-size="21.5" lengthAdjust="spacingAndGlyphs" textLength="9.2" fill="#fff">B</text><text x="35.6" y="23.9" font-family="Liberation Mono, monospace" font-weight="bold" font-size="21.5" lengthAdjust="spacingAndGlyphs" textLength="9.2" fill="#505055">C</text></g><g transform="translate(1363.00 652.00) "><rect x="12" y="0" width="21.2" height="33" rx="2.5" fill="#3d8c8c"/><text x="0" y="23.9" font-family="Liberation Mono, monospace" font-weight="bold" font-size="21.5" lengthAdjust="spacingAndGlyphs" textLength="9.2" fill="#505055">A</text><text x="18" y="23.9" font-family="Liberation Mono, monospace" font-weight="bold" font-size="21.5" lengthAdjust="spacingAndGlyphs" textLength="9.2" fill="#fff">B</text><text x="35.6" y="23.9" font-family="Liberation Mono, monospace" font-weight="bold" font-size="21.5" lengthAdjust="spacingAndGlyphs" textLength="9.2" fill="#505055">C</text></g><g transform="translate(1578.00 652.00) "><rect x="12" y="0" width="21.2" height="33" rx="2.5" fill="#3d8c8c"/><text x="0" y="23.9" font-family="Liberation Mono, monospace" font-weight="bold" font-size="21.5" lengthAdjust="spacingAndGlyphs" textLength="9.2" fill="#505055">A</text><text x="18" y="23.9" font-family="Liberation Mono, monospace" font-weight="bold" font-size="21.5" lengthAdjust="spacingAndGlyphs" textLength="9.2" fill="#fff">B</text><text x="35.6" y="23.9" font-family="Liberation Mono, monospace" font-weight="bold" font-size="21.5" lengthAdjust="spacingAndGlyphs" textLength="9.2" fill="#505055">C</text></g><g transform="translate(2347.20 652.00) "><rect x="12" y="0" width="21.2" height="33" rx="2.5" fill="#3d8c8c"/><text x="0" y="23.9" font-family="Liberation Mono, monospace" font-weight="bold" font-size="21.5" lengthAdjust="spacingAndGlyphs" textLength="9.2" fill="#505055">A</text><text x="18" y="23.9" font-family="Liberation Mono, monospace" font-weight="bold" font-size="21.5" lengthAdjust="spacingAndGlyphs" textLength="9.2" fill="#fff">B</text><text x="35.6" y="23.9" font-family="Liberation Mono, monospace" font-weight="bold" font-size="21.5" lengthAdjust="spacingAndGlyphs" textLength="9.2" fill="#505055">C</text></g><path d="M699 665.5 H726 M699 671.5 H726" stroke="#555" stroke-width="3"/><g transform="translate(708.90 746.30) "><rect x="-15.5" y="-15.5" width="31" height="31" rx="5" transform="rotate(45)" fill="#b8dfb8" stroke="#3f9a70" stroke-width="3"/></g><g transform="translate(1847.00 746.00) "><rect x="1.5" y="-19.5" width="45" height="39" rx="7" fill="#f78f8f" stroke="#c0443c" stroke-width="3"/><text x="24" y="5.5" font-family="Liberation Sans, sans-serif" font-size="16.8" fill="#111" text-anchor="middle" textLength="40" lengthAdjust="spacingAndGlyphs">SVHC</text></g><g transform="translate(1898.00 746.00) "><rect x="1.5" y="-19.5" width="45" height="39" rx="7" fill="#d0d6f0" stroke="#7478a8" stroke-width="3"/><text x="24" y="7.0" font-family="Liberation Sans, sans-serif" font-size="19.5" fill="#111" text-anchor="middle" textLength="35.5" lengthAdjust="spacingAndGlyphs">PBT</text></g><g transform="translate(708.90 825.30) "><rect x="-15.5" y="-15.5" width="31" height="31" rx="5" transform="rotate(45)" fill="#b8dfb8" stroke="#3f9a70" stroke-width="3"/></g><g transform="translate(1847.00 824.00) "><g stroke="#b8443a" stroke-width="2.900" stroke-linecap="round"><path d="M4.5 -18.4 L40.5 17.600 M43.5 -18.700 L7.300 17.600"/></g><g fill="#b8443a"><circle cx="3.100" cy="-16.300" r="2.9"/><circle cx="6.100" cy="-20.200" r="2.9"/><circle cx="45" cy="-17" r="2.9"/><circle cx="41.900" cy="-20.200" r="2.9"/><circle cx="5.800" cy="16" r="2.9"/><circle cx="9.100" cy="19.300" r="2.9"/><circle cx="42" cy="16" r="2.9"/><circle cx="38.900" cy="19.300" r="2.9"/></g><path d="M24 -18.400 C33 -18.400 37.400 -12 37.400 -5 C37.400 1 35.600 5 34.100 8.300 L32.600 13.500 H15.400 L13.900 8.300 C12.400 5 10.600 1 10.600 -5 C10.600 -12 15 -18.400 24 -18.400 Z" fill="#f48f8f" stroke="#b8443a" stroke-width="3" stroke-linejoin="round"/><path d="M14.900 12.500 H33.100 V18.800 Q33.100 21.800 30 21.800 H18 Q14.900 21.800 14.900 18.800 Z" fill="#b8443a"/><circle cx="18.150" cy="1.050" r="2.800" fill="#3a4060"/><circle cx="30" cy="1.050" r="2.800" fill="#3a4060"/><path d="M24 4.300 L26.800 9.600 H21.200 Z" fill="#3a4060"/></g><g transform="translate(708.90 904.30) "><rect x="-15.5" y="-15.5" width="31" height="31" rx="5" transform="rotate(45)" fill="#b8dfb8" stroke="#3f9a70" stroke-width="3"/></g><g transform="translate(1847.00 903.00) "><g stroke="#b8443a" stroke-width="2.900" stroke-linecap="round"><path d="M4.5 -18.4 L40.5 17.600 M43.5 -18.700 L7.300 17.600"/></g><g fill="#b8443a"><circle cx="3.100" cy="-16.300" r="2.9"/><circle cx="6.100" cy="-20.200" r="2.9"/><circle cx="45" cy="-17" r="2.9"/><circle cx="41.900" cy="-20.200" r="2.9"/><circle cx="5.800" cy="16" r="2.9"/><circle cx="9.100" cy="19.300" r="2.9"/><circle cx="42" cy="16" r="2.9"/><circle cx="38.900" cy="19.300" r="2.9"/></g><path d="M24 -18.400 C33 -18.400 37.400 -12 37.400 -5 C37.400 1 35.600 5 34.100 8.300 L32.600 13.500 H15.400 L13.900 8.300 C12.400 5 10.600 1 10.600 -5 C10.600 -12 15 -18.400 24 -18.400 Z" fill="#f48f8f" stroke="#b8443a" stroke-width="3" stroke-linejoin="round"/><path d="M14.900 12.500 H33.100 V18.800 Q33.100 21.800 30 21.800 H18 Q14.900 21.800 14.900 18.800 Z" fill="#b8443a"/><circle cx="18.150" cy="1.050" r="2.800" fill="#3a4060"/><circle cx="30" cy="1.050" r="2.800" fill="#3a4060"/><path d="M24 4.300 L26.800 9.600 H21.200 Z" fill="#3a4060"/></g><g transform="translate(1898.00 904.00) "><rect x="1.5" y="-19.5" width="45" height="39" rx="7" fill="#b0c0d8" stroke="#7880a8" stroke-width="3"/><text x="24" y="7.8" font-family="Liberation Sans, sans-serif" font-size="21.8" fill="#111" text-anchor="middle" textLength="39" lengthAdjust="spacingAndGlyphs">XVII</text></g><g transform="translate(1949.00 904.00) "><rect x="1.5" y="-19.5" width="45" height="39" rx="7" fill="#ffb0cc" stroke="#e84888" stroke-width="3"/><text x="24" y="10.6" font-family="Liberation Sans, sans-serif" font-size="29.5" fill="#111" text-anchor="middle" textLength="24.5" lengthAdjust="spacingAndGlyphs">IC</text></g><g transform="translate(2000.00 904.00) "><rect x="10.5" y="-19.5" width="27" height="39" fill="#dff2fc"/><path d="M37.5 -14.5 V-19.5 H10.5 V19.5 H37.5 V14.5" fill="none" stroke="#6f94cc" stroke-width="3"/><path d="M0.5 -7.2 L9.5 -10.8" stroke="#4d78b5" stroke-width="3.1" fill="none"/><path d="M18 -11 C22 -11 24 -6.8 28 -6.8 C32 -6.8 34.5 -11 38.5 -11 C42 -11 44 -8.5 47.5 -7" stroke="#4d78b5" stroke-width="3.1" fill="none"/><path d="M0.5 1.8 L9.5 -1.8" stroke="#4d78b5" stroke-width="3.1" fill="none"/><path d="M18 -2 C22 -2 24 2.2 28 2.2 C32 2.2 34.5 -2 38.5 -2 C42 -2 44 0.5 47.5 2" stroke="#4d78b5" stroke-width="3.1" fill="none"/><path d="M0.5 10.8 L9.5 7.2" stroke="#4d78b5" stroke-width="3.1" fill="none"/><path d="M18 7 C22 7 24 11.2 28 11.2 C32 11.2 34.5 7 38.5 7 C42 7 44 9.5 47.5 11" stroke="#4d78b5" stroke-width="3.1" fill="none"/></g><g transform="translate(2051.00 903.00) "><path d="M24 -21 C28 -12 37.5 -2 37.5 7.5 A13.5 13.5 0 0 1 10.500 7.5 C10.5 -2 20 -12 24 -21 Z" fill="#cce8fa" stroke="#6f94cc" stroke-width="3" stroke-linejoin="round"/><path d="M15.5 9 Q16.5 14.5 21.5 16" fill="none" stroke="#fff" stroke-width="2.4" stroke-linecap="round"/></g><g transform="translate(2102.00 904.00) "><rect x="10.5" y="-19.5" width="27" height="39" fill="#ffeea0"/><path d="M37.5 -14.5 V-19.5 H10.5 V19.5 H37.5 V14.5" fill="none" stroke="#c89850" stroke-width="3"/><path d="M0.5 -7.2 L9.5 -10.8" stroke="#f0d080" stroke-width="3.1" fill="none"/><path d="M18 -11 C22 -11 24 -6.8 28 -6.8 C32 -6.8 34.5 -11 38.5 -11 C42 -11 44 -8.5 47.5 -7" stroke="#f0d080" stroke-width="3.1" fill="none"/><path d="M0.5 1.8 L9.5 -1.8" stroke="#f0d080" stroke-width="3.1" fill="none"/><path d="M18 -2 C22 -2 24 2.2 28 2.2 C32 2.2 34.5 -2 38.5 -2 C42 -2 44 0.5 47.5 2" stroke="#f0d080" stroke-width="3.1" fill="none"/><path d="M0.5 10.8 L9.5 7.2" stroke="#f0d080" stroke-width="3.1" fill="none"/><path d="M18 7 C22 7 24 11.2 28 11.2 C32 11.2 34.5 7 38.5 7 C42 7 44 9.5 47.5 11" stroke="#f0d080" stroke-width="3.1" fill="none"/></g><g transform="translate(708.90 983.30) "><rect x="-15.5" y="-15.5" width="31" height="31" rx="5" transform="rotate(45)" fill="#b8dfb8" stroke="#3f9a70" stroke-width="3"/></g><g transform="translate(1847.00 983.00) "><rect x="1.5" y="-19.5" width="45" height="39" rx="7" fill="#b0c0d8" stroke="#7880a8" stroke-width="3"/><text x="24" y="7.8" font-family="Liberation Sans, sans-serif" font-size="21.8" fill="#111" text-anchor="middle" textLength="39" lengthAdjust="spacingAndGlyphs">XVII</text></g><g transform="translate(1898.00 983.00) "><rect x="1.5" y="-19.5" width="45" height="39" rx="7" fill="#ffb0cc" stroke="#e84888" stroke-width="3"/><text x="24" y="10.6" font-family="Liberation Sans, sans-serif" font-size="29.5" fill="#111" text-anchor="middle" textLength="24.5" lengthAdjust="spacingAndGlyphs">IC</text></g><g transform="translate(1949.00 983.00) "><rect x="10.5" y="-19.5" width="27" height="39" fill="#dff2fc"/><path d="M37.5 -14.5 V-19.5 H10.5 V19.5 H37.5 V14.5" fill="none" stroke="#6f94cc" stroke-width="3"/><path d="M0.5 -7.2 L9.5 -10.8" stroke="#4d78b5" stroke-width="3.1" fill="none"/><path d="M18 -11 C22 -11 24 -6.8 28 -6.8 C32 -6.8 34.5 -11 38.5 -11 C42 -11 44 -8.5 47.5 -7" stroke="#4d78b5" stroke-width="3.1" fill="none"/><path d="M0.5 1.8 L9.5 -1.8" stroke="#4d78b5" stroke-width="3.1" fill="none"/><path d="M18 -2 C22 -2 24 2.2 28 2.2 C32 2.2 34.5 -2 38.5 -2 C42 -2 44 0.5 47.5 2" stroke="#4d78b5" stroke-width="3.1" fill="none"/><path d="M0.5 10.8 L9.5 7.2" stroke="#4d78b5" stroke-width="3.1" fill="none"/><path d="M18 7 C22 7 24 11.2 28 11.2 C32 11.2 34.5 7 38.5 7 C42 7 44 9.5 47.5 11" stroke="#4d78b5" stroke-width="3.1" fill="none"/></g><g transform="translate(2000.00 982.00) "><path d="M24 -21 C28 -12 37.5 -2 37.5 7.5 A13.5 13.5 0 0 1 10.500 7.5 C10.5 -2 20 -12 24 -21 Z" fill="#cce8fa" stroke="#6f94cc" stroke-width="3" stroke-linejoin="round"/><path d="M15.5 9 Q16.5 14.5 21.5 16" fill="none" stroke="#fff" stroke-width="2.4" stroke-linecap="round"/></g><g transform="translate(708.90 1062.30) "><rect x="-15.5" y="-15.5" width="31" height="31" rx="5" transform="rotate(45)" fill="#b8dfb8" stroke="#3f9a70" stroke-width="3"/></g><g transform="translate(1847.00 1062.00) "><rect x="1.5" y="-19.5" width="45" height="39" rx="7" fill="#b0c0d8" stroke="#7880a8" stroke-width="3"/><text x="24" y="7.8" font-family="Liberation Sans, sans-serif" font-size="21.8" fill="#111" text-anchor="middle" textLength="39" lengthAdjust="spacingAndGlyphs">XVII</text></g><g transform="translate(1898.00 1062.00) "><rect x="1.5" y="-19.5" width="45" height="39" rx="7" fill="#ffb0cc" stroke="#e84888" stroke-width="3"/><text x="24" y="10.6" font-family="Liberation Sans, sans-serif" font-size="29.5" fill="#111" text-anchor="middle" textLength="24.5" lengthAdjust="spacingAndGlyphs">IC</text></g><g transform="translate(1949.00 1062.00) "><rect x="10.5" y="-19.5" width="27" height="39" fill="#dff2fc"/><path d="M37.5 -14.5 V-19.5 H10.5 V19.5 H37.5 V14.5" fill="none" stroke="#6f94cc" stroke-width="3"/><path d="M0.5 -7.2 L9.5 -10.8" stroke="#4d78b5" stroke-width="3.1" fill="none"/><path d="M18 -11 C22 -11 24 -6.8 28 -6.8 C32 -6.8 34.5 -11 38.5 -11 C42 -11 44 -8.5 47.5 -7" stroke="#4d78b5" stroke-width="3.1" fill="none"/><path d="M0.5 1.8 L9.5 -1.8" stroke="#4d78b5" stroke-width="3.1" fill="none"/><path d="M18 -2 C22 -2 24 2.2 28 2.2 C32 2.2 34.5 -2 38.5 -2 C42 -2 44 0.5 47.5 2" stroke="#4d78b5" stroke-width="3.1" fill="none"/><path d="M0.5 10.8 L9.5 7.2" stroke="#4d78b5" stroke-width="3.1" fill="none"/><path d="M18 7 C22 7 24 11.2 28 11.2 C32 11.2 34.5 7 38.5 7 C42 7 44 9.5 47.5 11" stroke="#4d78b5" stroke-width="3.1" fill="none"/></g><g transform="translate(708.90 1141.30) "><rect x="-15.5" y="-15.5" width="31" height="31" rx="5" transform="rotate(45)" fill="#b8dfb8" stroke="#3f9a70" stroke-width="3"/></g><g transform="translate(1847.00 1141.00) "><rect x="1.5" y="-19.5" width="45" height="39" rx="7" fill="#b0c0d8" stroke="#7880a8" stroke-width="3"/><text x="24" y="7.8" font-family="Liberation Sans, sans-serif" font-size="21.8" fill="#111" text-anchor="middle" textLength="39" lengthAdjust="spacingAndGlyphs">XVII</text></g><g transform="translate(1898.00 1141.00) "><rect x="1.5" y="-19.5" width="45" height="39" rx="7" fill="#ffb0cc" stroke="#e84888" stroke-width="3"/><text x="24" y="10.6" font-family="Liberation Sans, sans-serif" font-size="29.5" fill="#111" text-anchor="middle" textLength="24.5" lengthAdjust="spacingAndGlyphs">IC</text></g><g transform="translate(1949.00 1141.00) "><rect x="10.5" y="-19.5" width="27" height="39" fill="#dff2fc"/><path d="M37.5 -14.5 V-19.5 H10.5 V19.5 H37.5 V14.5" fill="none" stroke="#6f94cc" stroke-width="3"/><path d="M0.5 -7.2 L9.5 -10.8" stroke="#4d78b5" stroke-width="3.1" fill="none"/><path d="M18 -11 C22 -11 24 -6.8 28 -6.8 C32 -6.8 34.5 -11 38.5 -11 C42 -11 44 -8.5 47.5 -7" stroke="#4d78b5" stroke-width="3.1" fill="none"/><path d="M0.5 1.8 L9.5 -1.8" stroke="#4d78b5" stroke-width="3.1" fill="none"/><path d="M18 -2 C22 -2 24 2.2 28 2.2 C32 2.2 34.5 -2 38.5 -2 C42 -2 44 0.5 47.5 2" stroke="#4d78b5" stroke-width="3.1" fill="none"/><path d="M0.5 10.8 L9.5 7.2" stroke="#4d78b5" stroke-width="3.1" fill="none"/><path d="M18 7 C22 7 24 11.2 28 11.2 C32 11.2 34.5 7 38.5 7 C42 7 44 9.5 47.5 11" stroke="#4d78b5" stroke-width="3.1" fill="none"/></g><g transform="translate(708.90 1220.30) "><rect x="-15.5" y="-15.5" width="31" height="31" rx="5" transform="rotate(45)" fill="#b8dfb8" stroke="#3f9a70" stroke-width="3"/></g><g transform="translate(1847.00 1219.00) "><g stroke="#b8443a" stroke-width="2.900" stroke-linecap="round"><path d="M4.5 -18.4 L40.5 17.600 M43.5 -18.700 L7.300 17.600"/></g><g fill="#b8443a"><circle cx="3.100" cy="-16.300" r="2.9"/><circle cx="6.100" cy="-20.200" r="2.9"/><circle cx="45" cy="-17" r="2.9"/><circle cx="41.900" cy="-20.200" r="2.9"/><circle cx="5.800" cy="16" r="2.9"/><circle cx="9.100" cy="19.300" r="2.9"/><circle cx="42" cy="16" r="2.9"/><circle cx="38.900" cy="19.300" r="2.9"/></g><path d="M24 -18.400 C33 -18.400 37.400 -12 37.400 -5 C37.400 1 35.600 5 34.100 8.300 L32.600 13.500 H15.400 L13.900 8.300 C12.400 5 10.600 1 10.600 -5 C10.600 -12 15 -18.400 24 -18.400 Z" fill="#f48f8f" stroke="#b8443a" stroke-width="3" stroke-linejoin="round"/><path d="M14.900 12.500 H33.100 V18.800 Q33.100 21.800 30 21.800 H18 Q14.900 21.800 14.900 18.800 Z" fill="#b8443a"/><circle cx="18.150" cy="1.050" r="2.800" fill="#3a4060"/><circle cx="30" cy="1.050" r="2.800" fill="#3a4060"/><path d="M24 4.300 L26.800 9.600 H21.200 Z" fill="#3a4060"/></g><g transform="translate(1898.00 1220.00) "><rect x="1.5" y="-19.5" width="45" height="39" rx="7" fill="#b0c0d8" stroke="#7880a8" stroke-width="3"/><text x="24" y="7.8" font-family="Liberation Sans, sans-serif" font-size="21.8" fill="#111" text-anchor="middle" textLength="39" lengthAdjust="spacingAndGlyphs">XVII</text></g><g transform="translate(1949.00 1220.00) "><rect x="1.5" y="-19.5" width="45" height="39" rx="7" fill="#ffb0cc" stroke="#e84888" stroke-width="3"/><text x="24" y="10.6" font-family="Liberation Sans, sans-serif" font-size="29.5" fill="#111" text-anchor="middle" textLength="24.5" lengthAdjust="spacingAndGlyphs">IC</text></g><g transform="translate(2000.00 1220.00) "><rect x="10.5" y="-19.5" width="27" height="39" fill="#dff2fc"/><path d="M37.5 -14.5 V-19.5 H10.5 V19.5 H37.5 V14.5" fill="none" stroke="#6f94cc" stroke-width="3"/><path d="M0.5 -7.2 L9.5 -10.8" stroke="#4d78b5" stroke-width="3.1" fill="none"/><path d="M18 -11 C22 -11 24 -6.8 28 -6.8 C32 -6.8 34.5 -11 38.5 -11 C42 -11 44 -8.5 47.5 -7" stroke="#4d78b5" stroke-width="3.1" fill="none"/><path d="M0.5 1.8 L9.5 -1.8" stroke="#4d78b5" stroke-width="3.1" fill="none"/><path d="M18 -2 C22 -2 24 2.2 28 2.2 C32 2.2 34.5 -2 38.5 -2 C42 -2 44 0.5 47.5 2" stroke="#4d78b5" stroke-width="3.1" fill="none"/><path d="M0.5 10.8 L9.5 7.2" stroke="#4d78b5" stroke-width="3.1" fill="none"/><path d="M18 7 C22 7 24 11.2 28 11.2 C32 11.2 34.5 7 38.5 7 C42 7 44 9.5 47.5 11" stroke="#4d78b5" stroke-width="3.1" fill="none"/></g><g transform="translate(2051.00 1219.00) "><rect x="7.5" y="-21" width="33" height="42" rx="2" fill="#f89090" stroke="#c04048" stroke-width="3"/><path d="M11.3 -21 V21" stroke="#c04048" stroke-width="1.6"/><circle cx="25.3" cy="-0.5" r="10.5" fill="#fff"/><path d="M25.3 -7 V6 M18.8 -0.5 H31.8" stroke="#c04048" stroke-width="3"/></g><g transform="translate(2102.00 1219.00) "><path d="M24 -21 C28 -12 37.5 -2 37.5 7.5 A13.5 13.5 0 0 1 10.500 7.5 C10.5 -2 20 -12 24 -21 Z" fill="#cce8fa" stroke="#6f94cc" stroke-width="3" stroke-linejoin="round"/><path d="M15.5 9 Q16.5 14.5 21.5 16" fill="none" stroke="#fff" stroke-width="2.4" stroke-linecap="round"/></g><g transform="translate(2153.00 1220.00) "><rect x="10.5" y="-19.5" width="27" height="39" fill="#ffeea0"/><path d="M37.5 -14.5 V-19.5 H10.5 V19.5 H37.5 V14.5" fill="none" stroke="#c89850" stroke-width="3"/><path d="M0.5 -7.2 L9.5 -10.8" stroke="#f0d080" stroke-width="3.1" fill="none"/><path d="M18 -11 C22 -11 24 -6.8 28 -6.8 C32 -6.8 34.5 -11 38.5 -11 C42 -11 44 -8.5 47.5 -7" stroke="#f0d080" stroke-width="3.1" fill="none"/><path d="M0.5 1.8 L9.5 -1.8" stroke="#f0d080" stroke-width="3.1" fill="none"/><path d="M18 -2 C22 -2 24 2.2 28 2.2 C32 2.2 34.5 -2 38.5 -2 C42 -2 44 0.5 47.5 2" stroke="#f0d080" stroke-width="3.1" fill="none"/><path d="M0.5 10.8 L9.5 7.2" stroke="#f0d080" stroke-width="3.1" fill="none"/><path d="M18 7 C22 7 24 11.2 28 11.2 C32 11.2 34.5 7 38.5 7 C42 7 44 9.5 47.5 11" stroke="#f0d080" stroke-width="3.1" fill="none"/></g><g transform="translate(708.90 1299.30) "><rect x="-15.5" y="-15.5" width="31" height="31" rx="5" transform="rotate(45)" fill="#b8dfb8" stroke="#3f9a70" stroke-width="3"/></g><g transform="translate(1847.00 1299.00) "><rect x="1.5" y="-19.5" width="45" height="39" rx="7" fill="#b0c0d8" stroke="#7880a8" stroke-width="3"/><text x="24" y="7.8" font-family="Liberation Sans, sans-serif" font-size="21.8" fill="#111" text-anchor="middle" textLength="39" lengthAdjust="spacingAndGlyphs">XVII</text></g><g transform="translate(1898.00 1299.00) "><rect x="1.5" y="-19.5" width="45" height="39" rx="7" fill="#ffb0cc" stroke="#e84888" stroke-width="3"/><text x="24" y="10.6" font-family="Liberation Sans, sans-serif" font-size="29.5" fill="#111" text-anchor="middle" textLength="24.5" lengthAdjust="spacingAndGlyphs">IC</text></g><g transform="translate(1949.00 1299.00) "><rect x="10.5" y="-19.5" width="27" height="39" fill="#dff2fc"/><path d="M37.5 -14.5 V-19.5 H10.5 V19.5 H37.5 V14.5" fill="none" stroke="#6f94cc" stroke-width="3"/><path d="M0.5 -7.2 L9.5 -10.8" stroke="#4d78b5" stroke-width="3.1" fill="none"/><path d="M18 -11 C22 -11 24 -6.8 28 -6.8 C32 -6.8 34.5 -11 38.5 -11 C42 -11 44 -8.5 47.5 -7" stroke="#4d78b5" stroke-width="3.1" fill="none"/><path d="M0.5 1.8 L9.5 -1.8" stroke="#4d78b5" stroke-width="3.1" fill="none"/><path d="M18 -2 C22 -2 24 2.2 28 2.2 C32 2.2 34.5 -2 38.5 -2 C42 -2 44 0.5 47.5 2" stroke="#4d78b5" stroke-width="3.1" fill="none"/><path d="M0.5 10.8 L9.5 7.2" stroke="#4d78b5" stroke-width="3.1" fill="none"/><path d="M18 7 C22 7 24 11.2 28 11.2 C32 11.2 34.5 7 38.5 7 C42 7 44 9.5 47.5 11" stroke="#4d78b5" stroke-width="3.1" fill="none"/></g><g transform="translate(2000.00 1298.00) "><rect x="7.5" y="-21" width="33" height="42" rx="2" fill="#f89090" stroke="#c04048" stroke-width="3"/><path d="M11.3 -21 V21" stroke="#c04048" stroke-width="1.6"/><circle cx="25.3" cy="-0.5" r="10.5" fill="#fff"/><path d="M25.3 -7 V6 M18.8 -0.5 H31.8" stroke="#c04048" stroke-width="3"/></g><g transform="translate(2051.00 1298.00) "><path d="M24 -21 C28 -12 37.5 -2 37.5 7.5 A13.5 13.5 0 0 1 10.500 7.5 C10.5 -2 20 -12 24 -21 Z" fill="#cce8fa" stroke="#6f94cc" stroke-width="3" stroke-linejoin="round"/><path d="M15.5 9 Q16.5 14.5 21.5 16" fill="none" stroke="#fff" stroke-width="2.4" stroke-linecap="round"/></g><g transform="translate(2102.00 1299.00) "><rect x="10.5" y="-19.5" width="27" height="39" fill="#ffeea0"/><path d="M37.5 -14.5 V-19.5 H10.5 V19.5 H37.5 V14.5" fill="none" stroke="#c89850" stroke-width="3"/><path d="M0.5 -7.2 L9.5 -10.8" stroke="#f0d080" stroke-width="3.1" fill="none"/><path d="M18 -11 C22 -11 24 -6.8 28 -6.8 C32 -6.8 34.5 -11 38.5 -11 C42 -11 44 -8.5 47.5 -7" stroke="#f0d080" stroke-width="3.1" fill="none"/><path d="M0.5 1.8 L9.5 -1.8" stroke="#f0d080" stroke-width="3.1" fill="none"/><path d="M18 -2 C22 -2 24 2.2 28 2.2 C32 2.2 34.5 -2 38.5 -2 C42 -2 44 0.5 47.5 2" stroke="#f0d080" stroke-width="3.1" fill="none"/><path d="M0.5 10.8 L9.5 7.2" stroke="#f0d080" stroke-width="3.1" fill="none"/><path d="M18 7 C22 7 24 11.2 28 11.2 C32 11.2 34.5 7 38.5 7 C42 7 44 9.5 47.5 11" stroke="#f0d080" stroke-width="3.1" fill="none"/></g><g transform="translate(708.90 1378.30) "><rect x="-15.5" y="-15.5" width="31" height="31" rx="5" transform="rotate(45)" fill="#b8dfb8" stroke="#3f9a70" stroke-width="3"/></g><g transform="translate(1847.00 1378.00) "><rect x="1.5" y="-19.5" width="45" height="39" rx="7" fill="#b0c0d8" stroke="#7880a8" stroke-width="3"/><text x="24" y="7.8" font-family="Liberation Sans, sans-serif" font-size="21.8" fill="#111" text-anchor="middle" textLength="39" lengthAdjust="spacingAndGlyphs">XVII</text></g><g transform="translate(1898.00 1378.00) "><rect x="1.5" y="-19.5" width="45" height="39" rx="7" fill="#ffb0cc" stroke="#e84888" stroke-width="3"/><text x="24" y="10.6" font-family="Liberation Sans, sans-serif" font-size="29.5" fill="#111" text-anchor="middle" textLength="24.5" lengthAdjust="spacingAndGlyphs">IC</text></g><g transform="translate(1949.00 1378.00) "><rect x="10.5" y="-19.5" width="27" height="39" fill="#dff2fc"/><path d="M37.5 -14.5 V-19.5 H10.5 V19.5 H37.5 V14.5" fill="none" stroke="#6f94cc" stroke-width="3"/><path d="M0.5 -7.2 L9.5 -10.8" stroke="#4d78b5" stroke-width="3.1" fill="none"/><path d="M18 -11 C22 -11 24 -6.8 28 -6.8 C32 -6.8 34.5 -11 38.5 -11 C42 -11 44 -8.5 47.5 -7" stroke="#4d78b5" stroke-width="3.1" fill="none"/><path d="M0.5 1.8 L9.5 -1.8" stroke="#4d78b5" stroke-width="3.1" fill="none"/><path d="M18 -2 C22 -2 24 2.2 28 2.2 C32 2.2 34.5 -2 38.5 -2 C42 -2 44 0.5 47.5 2" stroke="#4d78b5" stroke-width="3.1" fill="none"/><path d="M0.5 10.8 L9.5 7.2" stroke="#4d78b5" stroke-width="3.1" fill="none"/><path d="M18 7 C22 7 24 11.2 28 11.2 C32 11.2 34.5 7 38.5 7 C42 7 44 9.5 47.5 11" stroke="#4d78b5" stroke-width="3.1" fill="none"/></g><g transform="translate(2000.00 1377.00) "><rect x="7.5" y="-21" width="33" height="42" rx="2" fill="#f89090" stroke="#c04048" stroke-width="3"/><path d="M11.3 -21 V21" stroke="#c04048" stroke-width="1.6"/><circle cx="25.3" cy="-0.5" r="10.5" fill="#fff"/><path d="M25.3 -7 V6 M18.8 -0.5 H31.8" stroke="#c04048" stroke-width="3"/></g><g transform="translate(2051.00 1377.00) "><path d="M24 -21 C28 -12 37.5 -2 37.5 7.5 A13.5 13.5 0 0 1 10.500 7.5 C10.5 -2 20 -12 24 -21 Z" fill="#cce8fa" stroke="#6f94cc" stroke-width="3" stroke-linejoin="round"/><path d="M15.5 9 Q16.5 14.5 21.5 16" fill="none" stroke="#fff" stroke-width="2.4" stroke-linecap="round"/></g><g transform="translate(2102.00 1378.00) "><rect x="10.5" y="-19.5" width="27" height="39" fill="#ffeea0"/><path d="M37.5 -14.5 V-19.5 H10.5 V19.5 H37.5 V14.5" fill="none" stroke="#c89850" stroke-width="3"/><path d="M0.5 -7.2 L9.5 -10.8" stroke="#f0d080" stroke-width="3.1" fill="none"/><path d="M18 -11 C22 -11 24 -6.8 28 -6.8 C32 -6.8 34.5 -11 38.5 -11 C42 -11 44 -8.5 47.5 -7" stroke="#f0d080" stroke-width="3.1" fill="none"/><path d="M0.5 1.8 L9.5 -1.8" stroke="#f0d080" stroke-width="3.1" fill="none"/><path d="M18 -2 C22 -2 24 2.2 28 2.2 C32 2.2 34.5 -2 38.5 -2 C42 -2 44 0.5 47.5 2" stroke="#f0d080" stroke-width="3.1" fill="none"/><path d="M0.5 10.8 L9.5 7.2" stroke="#f0d080" stroke-width="3.1" fill="none"/><path d="M18 7 C22 7 24 11.2 28 11.2 C32 11.2 34.5 7 38.5 7 C42 7 44 9.5 47.5 11" stroke="#f0d080" stroke-width="3.1" fill="none"/></g><g transform="translate(708.90 1457.30) "><rect x="-15.5" y="-15.5" width="31" height="31" rx="5" transform="rotate(45)" fill="#b8dfb8" stroke="#3f9a70" stroke-width="3"/></g><g transform="translate(1847.00 1457.00) "><rect x="1.5" y="-19.5" width="45" height="39" rx="7" fill="#b0c0d8" stroke="#7880a8" stroke-width="3"/><text x="24" y="7.8" font-family="Liberation Sans, sans-serif" font-size="21.8" fill="#111" text-anchor="middle" textLength="39" lengthAdjust="spacingAndGlyphs">XVII</text></g><g transform="translate(1898.00 1457.00) "><rect x="1.5" y="-19.5" width="45" height="39" rx="7" fill="#ffb0cc" stroke="#e84888" stroke-width="3"/><text x="24" y="10.6" font-family="Liberation Sans, sans-serif" font-size="29.5" fill="#111" text-anchor="middle" textLength="24.5" lengthAdjust="spacingAndGlyphs">IC</text></g><g transform="translate(1949.00 1457.00) "><rect x="10.5" y="-19.5" width="27" height="39" fill="#dff2fc"/><path d="M37.5 -14.5 V-19.5 H10.5 V19.5 H37.5 V14.5" fill="none" stroke="#6f94cc" stroke-width="3"/><path d="M0.5 -7.2 L9.5 -10.8" stroke="#4d78b5" stroke-width="3.1" fill="none"/><path d="M18 -11 C22 -11 24 -6.8 28 -6.8 C32 -6.8 34.5 -11 38.5 -11 C42 -11 44 -8.5 47.5 -7" stroke="#4d78b5" stroke-width="3.1" fill="none"/><path d="M0.5 1.8 L9.5 -1.8" stroke="#4d78b5" stroke-width="3.1" fill="none"/><path d="M18 -2 C22 -2 24 2.2 28 2.2 C32 2.2 34.5 -2 38.5 -2 C42 -2 44 0.5 47.5 2" stroke="#4d78b5" stroke-width="3.1" fill="none"/><path d="M0.5 10.8 L9.5 7.2" stroke="#4d78b5" stroke-width="3.1" fill="none"/><path d="M18 7 C22 7 24 11.2 28 11.2 C32 11.2 34.5 7 38.5 7 C42 7 44 9.5 47.5 11" stroke="#4d78b5" stroke-width="3.1" fill="none"/></g><g transform="translate(2000.00 1456.00) "><path d="M24 -21 C28 -12 37.5 -2 37.5 7.5 A13.5 13.5 0 0 1 10.500 7.5 C10.5 -2 20 -12 24 -21 Z" fill="#cce8fa" stroke="#6f94cc" stroke-width="3" stroke-linejoin="round"/><path d="M15.5 9 Q16.5 14.5 21.5 16" fill="none" stroke="#fff" stroke-width="2.4" stroke-linecap="round"/></g><g transform="translate(708.90 1536.30) "><rect x="-15.5" y="-15.5" width="31" height="31" rx="5" transform="rotate(45)" fill="#b8dfb8" stroke="#3f9a70" stroke-width="3"/></g><g transform="translate(1847.00 1535.00) "><g stroke="#b8443a" stroke-width="2.900" stroke-linecap="round"><path d="M4.5 -18.4 L40.5 17.600 M43.5 -18.700 L7.300 17.600"/></g><g fill="#b8443a"><circle cx="3.100" cy="-16.300" r="2.9"/><circle cx="6.100" cy="-20.200" r="2.9"/><circle cx="45" cy="-17" r="2.9"/><circle cx="41.900" cy="-20.200" r="2.9"/><circle cx="5.800" cy="16" r="2.9"/><circle cx="9.100" cy="19.300" r="2.9"/><circle cx="42" cy="16" r="2.9"/><circle cx="38.900" cy="19.300" r="2.9"/></g><path d="M24 -18.400 C33 -18.400 37.400 -12 37.400 -5 C37.400 1 35.600 5 34.100 8.300 L32.600 13.500 H15.400 L13.900 8.300 C12.400 5 10.600 1 10.600 -5 C10.600 -12 15 -18.400 24 -18.400 Z" fill="#f48f8f" stroke="#b8443a" stroke-width="3" stroke-linejoin="round"/><path d="M14.900 12.500 H33.100 V18.800 Q33.100 21.800 30 21.800 H18 Q14.900 21.800 14.900 18.800 Z" fill="#b8443a"/><circle cx="18.150" cy="1.050" r="2.800" fill="#3a4060"/><circle cx="30" cy="1.050" r="2.800" fill="#3a4060"/><path d="M24 4.300 L26.800 9.600 H21.200 Z" fill="#3a4060"/></g><g transform="translate(1898.00 1536.00) "><rect x="1.5" y="-19.5" width="45" height="39" rx="7" fill="#b0c0d8" stroke="#7880a8" stroke-width="3"/><text x="24" y="7.8" font-family="Liberation Sans, sans-serif" font-size="21.8" fill="#111" text-anchor="middle" textLength="39" lengthAdjust="spacingAndGlyphs">XVII</text></g><g transform="translate(1949.00 1536.00) "><rect x="1.5" y="-19.5" width="45" height="39" rx="7" fill="#ffb0cc" stroke="#e84888" stroke-width="3"/><text x="24" y="10.6" font-family="Liberation Sans, sans-serif" font-size="29.5" fill="#111" text-anchor="middle" textLength="24.5" lengthAdjust="spacingAndGlyphs">IC</text></g><g transform="translate(2000.00 1536.00) "><rect x="10.5" y="-19.5" width="27" height="39" fill="#dff2fc"/><path d="M37.5 -14.5 V-19.5 H10.5 V19.5 H37.5 V14.5" fill="none" stroke="#6f94cc" stroke-width="3"/><path d="M0.5 -7.2 L9.5 -10.8" stroke="#4d78b5" stroke-width="3.1" fill="none"/><path d="M18 -11 C22 -11 24 -6.8 28 -6.8 C32 -6.8 34.5 -11 38.5 -11 C42 -11 44 -8.5 47.5 -7" stroke="#4d78b5" stroke-width="3.1" fill="none"/><path d="M0.5 1.8 L9.5 -1.8" stroke="#4d78b5" stroke-width="3.1" fill="none"/><path d="M18 -2 C22 -2 24 2.2 28 2.2 C32 2.2 34.5 -2 38.5 -2 C42 -2 44 0.5 47.5 2" stroke="#4d78b5" stroke-width="3.1" fill="none"/><path d="M0.5 10.8 L9.5 7.2" stroke="#4d78b5" stroke-width="3.1" fill="none"/><path d="M18 7 C22 7 24 11.2 28 11.2 C32 11.2 34.5 7 38.5 7 C42 7 44 9.5 47.5 11" stroke="#4d78b5" stroke-width="3.1" fill="none"/></g><g transform="translate(2051.00 1535.00) "><path d="M24 -21 C28 -12 37.5 -2 37.5 7.5 A13.5 13.5 0 0 1 10.500 7.5 C10.5 -2 20 -12 24 -21 Z" fill="#cce8fa" stroke="#6f94cc" stroke-width="3" stroke-linejoin="round"/><path d="M15.5 9 Q16.5 14.5 21.5 16" fill="none" stroke="#fff" stroke-width="2.4" stroke-linecap="round"/></g><g transform="translate(708.90 1615.30) "><rect x="-15.5" y="-15.5" width="31" height="31" rx="5" transform="rotate(45)" fill="#b8dfb8" stroke="#3f9a70" stroke-width="3"/></g><g transform="translate(1847.00 1615.00) "><rect x="10.5" y="-19.5" width="27" height="39" fill="#dff2fc"/><path d="M37.5 -14.5 V-19.5 H10.5 V19.5 H37.5 V14.5" fill="none" stroke="#6f94cc" stroke-width="3"/><path d="M0.5 -7.2 L9.5 -10.8" stroke="#4d78b5" stroke-width="3.1" fill="none"/><path d="M18 -11 C22 -11 24 -6.8 28 -6.8 C32 -6.8 34.5 -11 38.5 -11 C42 -11 44 -8.5 47.5 -7" stroke="#4d78b5" stroke-width="3.1" fill="none"/><path d="M0.5 1.8 L9.5 -1.8" stroke="#4d78b5" stroke-width="3.1" fill="none"/><path d="M18 -2 C22 -2 24 2.2 28 2.2 C32 2.2 34.5 -2 38.5 -2 C42 -2 44 0.5 47.5 2" stroke="#4d78b5" stroke-width="3.1" fill="none"/><path d="M0.5 10.8 L9.5 7.2" stroke="#4d78b5" stroke-width="3.1" fill="none"/><path d="M18 7 C22 7 24 11.2 28 11.2 C32 11.2 34.5 7 38.5 7 C42 7 44 9.5 47.5 11" stroke="#4d78b5" stroke-width="3.1" fill="none"/></g><g transform="translate(1898.00 1614.00) "><path d="M24 -21 C28 -12 37.5 -2 37.5 7.5 A13.5 13.5 0 0 1 10.500 7.5 C10.5 -2 20 -12 24 -21 Z" fill="#cce8fa" stroke="#6f94cc" stroke-width="3" stroke-linejoin="round"/><path d="M15.5 9 Q16.5 14.5 21.5 16" fill="none" stroke="#fff" stroke-width="2.4" stroke-linecap="round"/></g><g transform="translate(708.90 1694.30) "><rect x="-15.5" y="-15.5" width="31" height="31" rx="5" transform="rotate(45)" fill="#b8dfb8" stroke="#3f9a70" stroke-width="3"/></g><g transform="translate(1847.00 1694.00) "><rect x="10.5" y="-19.5" width="27" height="39" fill="#dff2fc"/><path d="M37.5 -14.5 V-19.5 H10.5 V19.5 H37.5 V14.5" fill="none" stroke="#6f94cc" stroke-width="3"/><path d="M0.5 -7.2 L9.5 -10.8" stroke="#4d78b5" stroke-width="3.1" fill="none"/><path d="M18 -11 C22 -11 24 -6.8 28 -6.8 C32 -6.8 34.5 -11 38.5 -11 C42 -11 44 -8.5 47.5 -7" stroke="#4d78b5" stroke-width="3.1" fill="none"/><path d="M0.5 1.8 L9.5 -1.8" stroke="#4d78b5" stroke-width="3.1" fill="none"/><path d="M18 -2 C22 -2 24 2.2 28 2.2 C32 2.2 34.5 -2 38.5 -2 C42 -2 44 0.5 47.5 2" stroke="#4d78b5" stroke-width="3.1" fill="none"/><path d="M0.5 10.8 L9.5 7.2" stroke="#4d78b5" stroke-width="3.1" fill="none"/><path d="M18 7 C22 7 24 11.2 28 11.2 C32 11.2 34.5 7 38.5 7 C42 7 44 9.5 47.5 11" stroke="#4d78b5" stroke-width="3.1" fill="none"/></g><g transform="translate(1898.00 1693.00) "><path d="M24 -21 C28 -12 37.5 -2 37.5 7.5 A13.5 13.5 0 0 1 10.500 7.5 C10.5 -2 20 -12 24 -21 Z" fill="#cce8fa" stroke="#6f94cc" stroke-width="3" stroke-linejoin="round"/><path d="M15.5 9 Q16.5 14.5 21.5 16" fill="none" stroke="#fff" stroke-width="2.4" stroke-linecap="round"/></g><g transform="translate(708.90 1773.30) "><rect x="-15.5" y="-15.5" width="31" height="31" rx="5" transform="rotate(45)" fill="#b8dfb8" stroke="#3f9a70" stroke-width="3"/></g><g transform="translate(1847.00 1773.00) "><rect x="1.5" y="-19.5" width="45" height="39" rx="7" fill="#b0c0d8" stroke="#7880a8" stroke-width="3"/><text x="24" y="7.8" font-family="Liberation Sans, sans-serif" font-size="21.8" fill="#111" text-anchor="middle" textLength="39" lengthAdjust="spacingAndGlyphs">XVII</text></g><g transform="translate(1898.00 1773.00) "><rect x="10.5" y="-19.5" width="27" height="39" fill="#dff2fc"/><path d="M37.5 -14.5 V-19.5 H10.5 V19.5 H37.5 V14.5" fill="none" stroke="#6f94cc" stroke-width="3"/><path d="M0.5 -7.2 L9.5 -10.8" stroke="#4d78b5" stroke-width="3.1" fill="none"/><path d="M18 -11 C22 -11 24 -6.8 28 -6.8 C32 -6.8 34.5 -11 38.5 -11 C42 -11 44 -8.5 47.5 -7" stroke="#4d78b5" stroke-width="3.1" fill="none"/><path d="M0.5 1.8 L9.5 -1.8" stroke="#4d78b5" stroke-width="3.1" fill="none"/><path d="M18 -2 C22 -2 24 2.2 28 2.2 C32 2.2 34.5 -2 38.5 -2 C42 -2 44 0.5 47.5 2" stroke="#4d78b5" stroke-width="3.1" fill="none"/><path d="M0.5 10.8 L9.5 7.2" stroke="#4d78b5" stroke-width="3.1" fill="none"/><path d="M18 7 C22 7 24 11.2 28 11.2 C32 11.2 34.5 7 38.5 7 C42 7 44 9.5 47.5 11" stroke="#4d78b5" stroke-width="3.1" fill="none"/></g><g transform="translate(1949.00 1773.00) "><rect x="10.5" y="-19.5" width="27" height="39" fill="#ffeea0"/><path d="M37.5 -14.5 V-19.5 H10.5 V19.5 H37.5 V14.5" fill="none" stroke="#c89850" stroke-width="3"/><path d="M0.5 -7.2 L9.5 -10.8" stroke="#f0d080" stroke-width="3.1" fill="none"/><path d="M18 -11 C22 -11 24 -6.8 28 -6.8 C32 -6.8 34.5 -11 38.5 -11 C42 -11 44 -8.5 47.5 -7" stroke="#f0d080" stroke-width="3.1" fill="none"/><path d="M0.5 1.8 L9.5 -1.8" stroke="#f0d080" stroke-width="3.1" fill="none"/><path d="M18 -2 C22 -2 24 2.2 28 2.2 C32 2.2 34.5 -2 38.5 -2 C42 -2 44 0.5 47.5 2" stroke="#f0d080" stroke-width="3.1" fill="none"/><path d="M0.5 10.8 L9.5 7.2" stroke="#f0d080" stroke-width="3.1" fill="none"/><path d="M18 7 C22 7 24 11.2 28 11.2 C32 11.2 34.5 7 38.5 7 C42 7 44 9.5 47.5 11" stroke="#f0d080" stroke-width="3.1" fill="none"/></g><g transform="translate(2000.00 1773.00) "><path d="M1.5 23 Q3 9.5 18 9 L24 11 L30 9 Q45 9.500 46.5 23 Z" fill="#ffb0cc" stroke="#e84880" stroke-width="3.4" stroke-linejoin="round"/><path d="M4 21.500 H44 V23 H4 Z" fill="#e84880"/><path d="M22 12 L26.500 18 L33 13.500 L28 21 H12 Z" fill="#e84880" opacity="0.85"/><ellipse cx="24" cy="-7.5" rx="13.3" ry="14.5" fill="#ffb0cc" stroke="#e84880" stroke-width="3.4"/></g><g transform="translate(708.90 1852.30) "><rect x="-15.5" y="-15.5" width="31" height="31" rx="5" transform="rotate(45)" fill="#b8dfb8" stroke="#3f9a70" stroke-width="3"/></g><g transform="translate(1847.00 1852.00) "><rect x="10.5" y="-19.5" width="27" height="39" fill="#dff2fc"/><path d="M37.5 -14.5 V-19.5 H10.5 V19.5 H37.5 V14.5" fill="none" stroke="#6f94cc" stroke-width="3"/><path d="M0.5 -7.2 L9.5 -10.8" stroke="#4d78b5" stroke-width="3.1" fill="none"/><path d="M18 -11 C22 -11 24 -6.8 28 -6.8 C32 -6.8 34.5 -11 38.5 -11 C42 -11 44 -8.5 47.5 -7" stroke="#4d78b5" stroke-width="3.1" fill="none"/><path d="M0.5 1.8 L9.5 -1.8" stroke="#4d78b5" stroke-width="3.1" fill="none"/><path d="M18 -2 C22 -2 24 2.2 28 2.2 C32 2.2 34.5 -2 38.5 -2 C42 -2 44 0.5 47.5 2" stroke="#4d78b5" stroke-width="3.1" fill="none"/><path d="M0.5 10.8 L9.5 7.2" stroke="#4d78b5" stroke-width="3.1" fill="none"/><path d="M18 7 C22 7 24 11.2 28 11.2 C32 11.2 34.5 7 38.5 7 C42 7 44 9.5 47.5 11" stroke="#4d78b5" stroke-width="3.1" fill="none"/></g><g transform="translate(1898.00 1851.00) "><path d="M24 -21 C28 -12 37.5 -2 37.5 7.5 A13.5 13.5 0 0 1 10.500 7.5 C10.5 -2 20 -12 24 -21 Z" fill="#cce8fa" stroke="#6f94cc" stroke-width="3" stroke-linejoin="round"/><path d="M15.5 9 Q16.5 14.5 21.5 16" fill="none" stroke="#fff" stroke-width="2.4" stroke-linecap="round"/></g><path d="M83.4 1943.7 V1968.3" stroke="#70709c" stroke-width="3.1"/><path d="M103.3 1943.7 L91.0 1956.0 L103.3 1968.3" fill="none" stroke="#6a6488" stroke-width="3"/><path d="M115.4 1943.7 L103.1 1956.0 L115.4 1968.3" fill="none" stroke="#6a6488" stroke-width="3"/><path d="M173.3 1943.7 L161.0 1956.0 L173.3 1968.3" fill="none" stroke="#6a6488" stroke-width="3"/><path d="M185.4 1943.7 L173.1 1956.0 L185.4 1968.3" fill="none" stroke="#6a6488" stroke-width="3"/><path d="M249.8 1943.7 L237.5 1956.0 L249.8 1968.3" fill="none" stroke="#6a6488" stroke-width="3"/><path d="M727.5 1943.7 L739.8 1956.0 L727.5 1968.3" fill="none" stroke="#1b1b2a" stroke-width="3"/><path d="M792.4 1943.7 L804.7 1956.0 L792.4 1968.3" fill="none" stroke="#1b1b2a" stroke-width="3"/><path d="M804.5 1943.7 L816.8 1956.0 L804.5 1968.3" fill="none" stroke="#1b1b2a" stroke-width="3"/><path d="M862.0 1943.7 L874.3 1956.0 L862.0 1968.3" fill="none" stroke="#1b1b2a" stroke-width="3"/><path d="M874.1 1943.7 L886.4 1956.0 L874.1 1968.3" fill="none" stroke="#1b1b2a" stroke-width="3"/><path d="M894.2 1943.7 V1968.3" stroke="#1b1b2a" stroke-width="3"/></svg>
</body></html>
